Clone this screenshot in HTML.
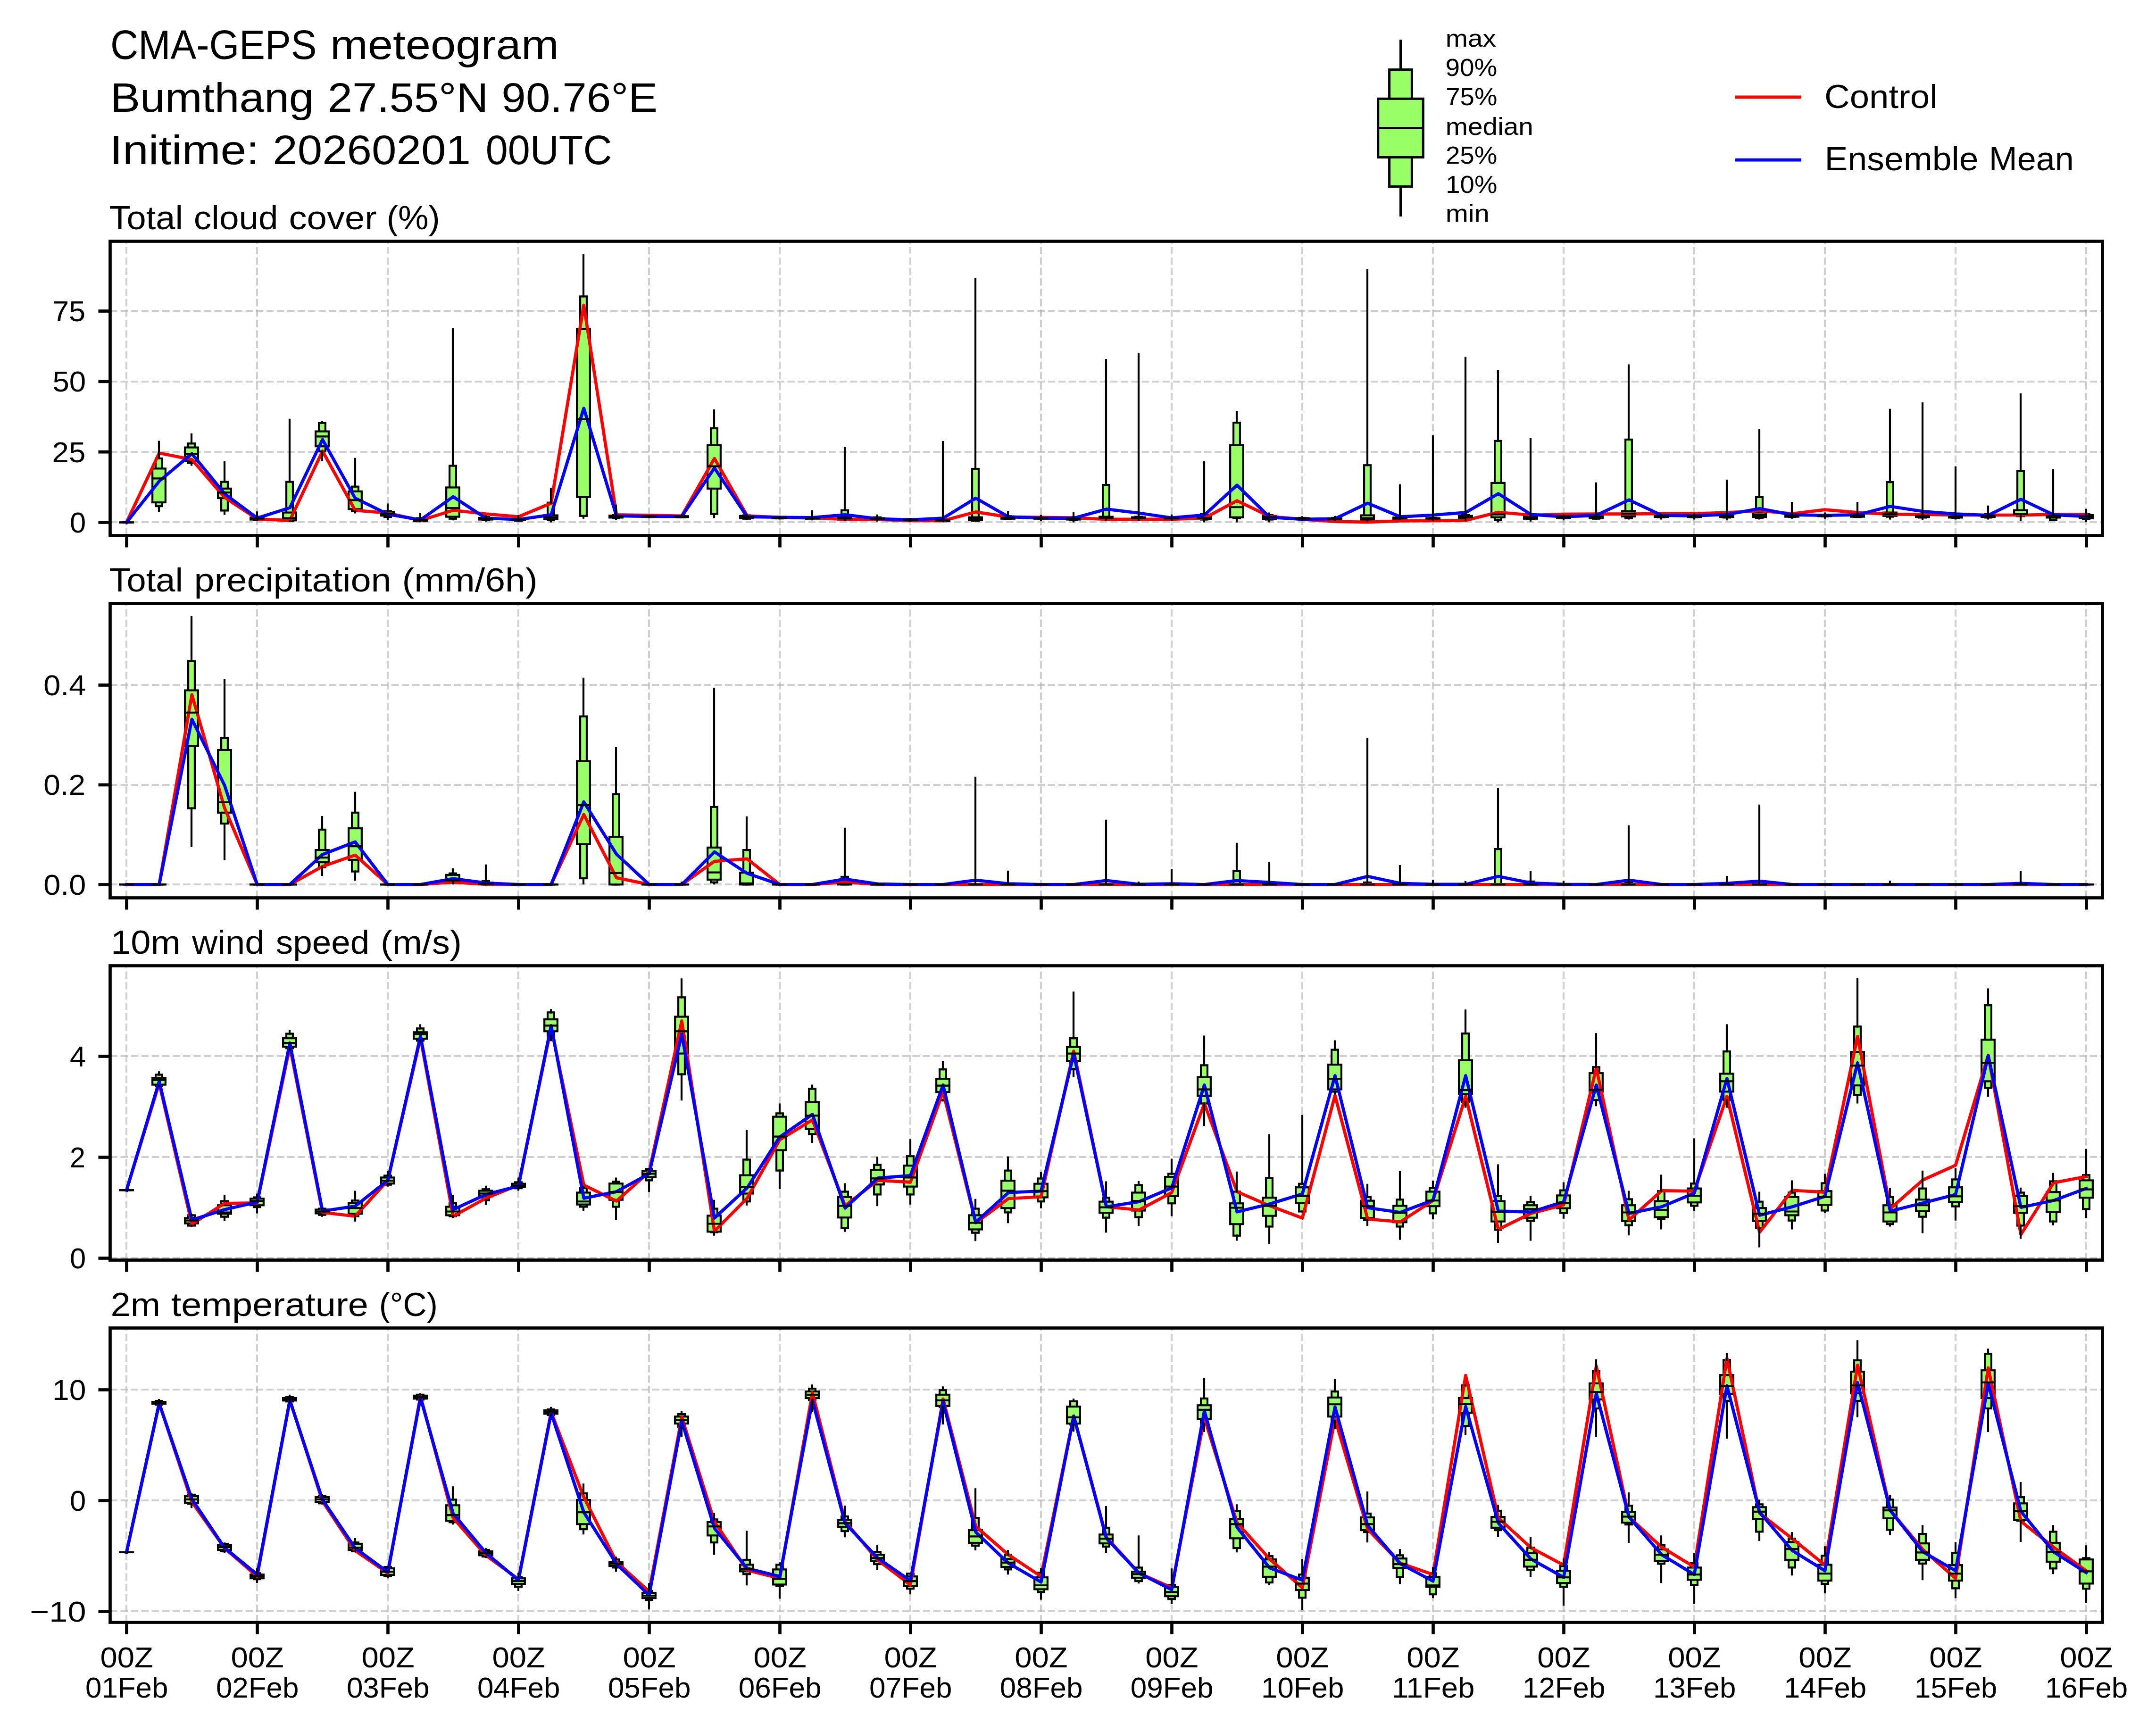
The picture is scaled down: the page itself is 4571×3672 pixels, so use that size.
<!DOCTYPE html>
<html><head><meta charset="utf-8"><title>CMA-GEPS meteogram</title>
<style>html,body{margin:0;padding:0;background:#fff;overflow:hidden;width:4571px;height:3672px}svg{display:block}</style></head>
<body>
<svg width="4571" height="3672" viewBox="0 0 4571 3672" font-family="'Liberation Sans', sans-serif" fill="#000">
<rect width="4571" height="3672" fill="#fff"/>
<text y="124.70" font-size="87.50"><tspan x="234.02" textLength="437.37" lengthAdjust="spacingAndGlyphs">CMA-GEPS</tspan> <tspan x="699.95" textLength="484.81" lengthAdjust="spacingAndGlyphs">meteogram</tspan></text>
<text y="236.80" font-size="87.50"><tspan x="233.91" textLength="431.55" lengthAdjust="spacingAndGlyphs">Bumthang</tspan> <tspan x="694.80" textLength="340.68" lengthAdjust="spacingAndGlyphs">27.55°N</tspan> <tspan x="1063.39" textLength="330.63" lengthAdjust="spacingAndGlyphs">90.76°E</tspan></text>
<text y="348.40" font-size="87.50"><tspan x="232.60" textLength="317.05" lengthAdjust="spacingAndGlyphs">Initime:</tspan> <tspan x="578.24" textLength="419.71" lengthAdjust="spacingAndGlyphs">20260201</tspan> <tspan x="1029.72" textLength="267.75" lengthAdjust="spacingAndGlyphs">00UTC</tspan></text>
<g stroke="#000" stroke-width="5.0" fill="#99ff66">
<line x1="2969.5" y1="84.1" x2="2969.5" y2="458.9"/>
<rect x="2945.60" y="147.6" width="47.8" height="247.80"/>
<rect x="2921.70" y="209.3" width="95.6" height="124.20"/>
<line x1="2921.70" y1="271.5" x2="3017.30" y2="271.5"/>
</g>
<text y="99.00" font-size="52.50"><tspan x="3064.78" textLength="107.13" lengthAdjust="spacingAndGlyphs">max</tspan></text>
<text y="160.90" font-size="52.50"><tspan x="3064.58" textLength="109.75" lengthAdjust="spacingAndGlyphs">90%</tspan></text>
<text y="222.80" font-size="52.50"><tspan x="3065.31" textLength="109.01" lengthAdjust="spacingAndGlyphs">75%</tspan></text>
<text y="285.70" font-size="52.50"><tspan x="3064.77" textLength="186.09" lengthAdjust="spacingAndGlyphs">median</tspan></text>
<text y="346.80" font-size="52.50"><tspan x="3064.91" textLength="109.41" lengthAdjust="spacingAndGlyphs">25%</tspan></text>
<text y="408.70" font-size="52.50"><tspan x="3065.35" textLength="108.97" lengthAdjust="spacingAndGlyphs">10%</tspan></text>
<text y="470.40" font-size="52.50"><tspan x="3064.70" textLength="93.09" lengthAdjust="spacingAndGlyphs">min</tspan></text>
<line x1="3682.4" y1="205.9" x2="3815.7" y2="205.9" stroke="#ff0000" stroke-width="6.67" stroke-linecap="square"/>
<line x1="3682.4" y1="339.2" x2="3815.7" y2="339.2" stroke="#0000ff" stroke-width="6.67" stroke-linecap="square"/>
<text y="229.20" font-size="70.00"><tspan x="3867.97" textLength="239.74" lengthAdjust="spacingAndGlyphs">Control</tspan></text>
<text y="361.30" font-size="70.00"><tspan x="3868.53" textLength="326.11" lengthAdjust="spacingAndGlyphs">Ensemble</tspan> <tspan x="4216.76" textLength="180.01" lengthAdjust="spacingAndGlyphs">Mean</tspan></text>
<clipPath id="c0"><rect x="233.5" y="511.5" width="4224.00" height="624.0"/></clipPath>
<g clip-path="url(#c0)">
<g stroke="#b0b0b0" stroke-opacity="0.6" stroke-width="4.17" stroke-dasharray="15.42 6.67" fill="none">
<line x1="268.00" y1="1135.5" x2="268.00" y2="511.5"/>
<line x1="545.00" y1="1135.5" x2="545.00" y2="511.5"/>
<line x1="822.00" y1="1135.5" x2="822.00" y2="511.5"/>
<line x1="1099.00" y1="1135.5" x2="1099.00" y2="511.5"/>
<line x1="1376.00" y1="1135.5" x2="1376.00" y2="511.5"/>
<line x1="1653.00" y1="1135.5" x2="1653.00" y2="511.5"/>
<line x1="1930.00" y1="1135.5" x2="1930.00" y2="511.5"/>
<line x1="2207.00" y1="1135.5" x2="2207.00" y2="511.5"/>
<line x1="2484.00" y1="1135.5" x2="2484.00" y2="511.5"/>
<line x1="2761.00" y1="1135.5" x2="2761.00" y2="511.5"/>
<line x1="3038.00" y1="1135.5" x2="3038.00" y2="511.5"/>
<line x1="3315.00" y1="1135.5" x2="3315.00" y2="511.5"/>
<line x1="3592.00" y1="1135.5" x2="3592.00" y2="511.5"/>
<line x1="3869.00" y1="1135.5" x2="3869.00" y2="511.5"/>
<line x1="4146.00" y1="1135.5" x2="4146.00" y2="511.5"/>
<line x1="4423.00" y1="1135.5" x2="4423.00" y2="511.5"/>
<line x1="233.5" y1="1107.00" x2="4457.5" y2="1107.00"/>
<line x1="233.5" y1="958.00" x2="4457.5" y2="958.00"/>
<line x1="233.5" y1="809.00" x2="4457.5" y2="809.00"/>
<line x1="233.5" y1="659.00" x2="4457.5" y2="659.00"/>
</g>
<g stroke="#000" stroke-width="4.17" fill="#99ff66">
<rect x="261.08" y="1107.50" width="13.85" height="0.01"/>
<rect x="254.15" y="1107.50" width="27.70" height="0.01"/>
<rect x="330.08" y="971.91" width="13.85" height="101.25"/>
<rect x="323.15" y="993.41" width="27.70" height="71.68"/>
<rect x="399.08" y="940.25" width="13.85" height="41.22"/>
<rect x="392.15" y="948.61" width="27.70" height="29.27"/>
<rect x="469.08" y="1021.48" width="13.85" height="60.93"/>
<rect x="462.15" y="1035.82" width="27.70" height="20.31"/>
<rect x="538.08" y="1095.55" width="13.85" height="6.57"/>
<rect x="531.15" y="1097.35" width="27.70" height="4.18"/>
<rect x="607.08" y="1021.48" width="13.85" height="83.03"/>
<rect x="600.15" y="1086.59" width="27.70" height="16.73"/>
<rect x="676.08" y="896.64" width="13.85" height="60.33"/>
<rect x="669.15" y="914.56" width="27.70" height="31.66"/>
<rect x="746.08" y="1031.64" width="13.85" height="51.97"/>
<rect x="739.15" y="1041.79" width="27.70" height="37.63"/>
<rect x="815.08" y="1083.61" width="13.85" height="12.54"/>
<rect x="808.15" y="1085.40" width="27.70" height="7.77"/>
<rect x="884.08" y="1098.54" width="13.85" height="6.57"/>
<rect x="877.15" y="1099.73" width="27.70" height="4.78"/>
<rect x="953.08" y="987.44" width="13.85" height="112.30"/>
<rect x="946.15" y="1033.43" width="27.70" height="62.12"/>
<rect x="1023.08" y="1096.15" width="13.85" height="6.57"/>
<rect x="1016.15" y="1097.94" width="27.70" height="3.58"/>
<rect x="1092.08" y="1099.73" width="13.85" height="4.18"/>
<rect x="1085.15" y="1100.33" width="27.70" height="2.39"/>
<rect x="1161.08" y="1065.69" width="13.85" height="36.44"/>
<rect x="1154.15" y="1092.57" width="27.70" height="8.36"/>
<rect x="1230.08" y="628.44" width="13.85" height="465.32"/>
<rect x="1223.15" y="697.13" width="27.70" height="356.61"/>
<rect x="1299.08" y="1091.97" width="13.85" height="6.57"/>
<rect x="1292.15" y="1093.16" width="27.70" height="4.18"/>
<rect x="1369.08" y="1093.76" width="13.85" height="2.39"/>
<rect x="1362.15" y="1094.36" width="27.70" height="1.19"/>
<rect x="1438.08" y="1093.76" width="13.85" height="2.99"/>
<rect x="1431.15" y="1094.36" width="27.70" height="1.79"/>
<rect x="1507.08" y="907.99" width="13.85" height="181.59"/>
<rect x="1500.15" y="943.83" width="27.70" height="91.99"/>
<rect x="1576.08" y="1092.57" width="13.85" height="7.17"/>
<rect x="1569.15" y="1093.76" width="27.70" height="4.78"/>
<rect x="1646.08" y="1096.15" width="13.85" height="2.99"/>
<rect x="1639.15" y="1096.75" width="27.70" height="1.79"/>
<rect x="1715.08" y="1096.75" width="13.85" height="4.18"/>
<rect x="1708.15" y="1097.94" width="27.70" height="2.39"/>
<rect x="1784.08" y="1081.81" width="13.85" height="20.31"/>
<rect x="1777.15" y="1095.55" width="27.70" height="5.97"/>
<rect x="1853.08" y="1096.75" width="13.85" height="5.97"/>
<rect x="1846.15" y="1098.54" width="27.70" height="3.58"/>
<rect x="1923.08" y="1100.33" width="13.85" height="3.58"/>
<rect x="1916.15" y="1100.93" width="27.70" height="2.39"/>
<rect x="1992.08" y="1101.53" width="13.85" height="3.58"/>
<rect x="1985.15" y="1102.12" width="27.70" height="2.39"/>
<rect x="2061.08" y="994.01" width="13.85" height="109.91"/>
<rect x="2054.15" y="1096.75" width="27.70" height="5.38"/>
<rect x="2130.08" y="1094.36" width="13.85" height="5.97"/>
<rect x="2123.15" y="1096.15" width="27.70" height="3.58"/>
<rect x="2200.08" y="1096.75" width="13.85" height="3.58"/>
<rect x="2193.15" y="1097.35" width="27.70" height="2.39"/>
<rect x="2269.08" y="1096.75" width="13.85" height="5.97"/>
<rect x="2262.15" y="1097.94" width="27.70" height="3.58"/>
<rect x="2338.08" y="1028.06" width="13.85" height="73.47"/>
<rect x="2331.15" y="1095.55" width="27.70" height="4.78"/>
<rect x="2407.08" y="1095.55" width="13.85" height="6.57"/>
<rect x="2400.15" y="1096.75" width="27.70" height="4.18"/>
<rect x="2477.08" y="1097.35" width="13.85" height="4.18"/>
<rect x="2470.15" y="1097.94" width="27.70" height="2.39"/>
<rect x="2546.08" y="1089.58" width="13.85" height="11.95"/>
<rect x="2539.15" y="1095.55" width="27.70" height="4.78"/>
<rect x="2615.08" y="896.05" width="13.85" height="202.49"/>
<rect x="2608.15" y="943.83" width="27.70" height="152.92"/>
<rect x="2684.08" y="1091.97" width="13.85" height="9.56"/>
<rect x="2677.15" y="1093.76" width="27.70" height="6.57"/>
<rect x="2754.08" y="1097.94" width="13.85" height="3.58"/>
<rect x="2747.15" y="1098.54" width="27.70" height="2.39"/>
<rect x="2823.08" y="1097.94" width="13.85" height="4.78"/>
<rect x="2816.15" y="1099.14" width="27.70" height="2.99"/>
<rect x="2892.08" y="986.24" width="13.85" height="117.08"/>
<rect x="2885.15" y="1092.57" width="27.70" height="9.56"/>
<rect x="2961.08" y="1096.15" width="13.85" height="4.78"/>
<rect x="2954.15" y="1097.35" width="27.70" height="2.99"/>
<rect x="3031.08" y="1097.94" width="13.85" height="4.18"/>
<rect x="3024.15" y="1098.54" width="27.70" height="2.99"/>
<rect x="3100.08" y="1091.97" width="13.85" height="8.36"/>
<rect x="3093.15" y="1093.76" width="27.70" height="5.97"/>
<rect x="3169.08" y="934.87" width="13.85" height="167.25"/>
<rect x="3162.15" y="1023.87" width="27.70" height="72.87"/>
<rect x="3238.08" y="1092.57" width="13.85" height="7.77"/>
<rect x="3231.15" y="1094.36" width="27.70" height="5.38"/>
<rect x="3308.08" y="1093.16" width="13.85" height="5.38"/>
<rect x="3301.15" y="1094.36" width="27.70" height="3.58"/>
<rect x="3377.08" y="1091.37" width="13.85" height="8.36"/>
<rect x="3370.15" y="1093.16" width="27.70" height="5.38"/>
<rect x="3446.08" y="931.88" width="13.85" height="166.66"/>
<rect x="3439.15" y="1083.61" width="27.70" height="11.35"/>
<rect x="3515.08" y="1091.37" width="13.85" height="5.38"/>
<rect x="3508.15" y="1092.57" width="27.70" height="3.58"/>
<rect x="3585.08" y="1092.57" width="13.85" height="4.18"/>
<rect x="3578.15" y="1093.16" width="27.70" height="2.99"/>
<rect x="3654.08" y="1090.18" width="13.85" height="7.17"/>
<rect x="3647.15" y="1091.37" width="27.70" height="4.78"/>
<rect x="3723.08" y="1053.74" width="13.85" height="44.20"/>
<rect x="3716.15" y="1086.59" width="27.70" height="9.56"/>
<rect x="3792.08" y="1090.18" width="13.85" height="5.97"/>
<rect x="3785.15" y="1091.37" width="27.70" height="4.18"/>
<rect x="3862.08" y="1091.37" width="13.85" height="3.58"/>
<rect x="3855.15" y="1091.97" width="27.70" height="2.39"/>
<rect x="3931.08" y="1090.18" width="13.85" height="5.97"/>
<rect x="3924.15" y="1091.37" width="27.70" height="4.18"/>
<rect x="4000.08" y="1022.08" width="13.85" height="73.47"/>
<rect x="3993.15" y="1086.59" width="27.70" height="7.17"/>
<rect x="4069.08" y="1090.18" width="13.85" height="7.17"/>
<rect x="4062.15" y="1091.37" width="27.70" height="4.78"/>
<rect x="4139.08" y="1091.97" width="13.85" height="5.97"/>
<rect x="4132.15" y="1092.57" width="27.70" height="4.78"/>
<rect x="4208.08" y="1089.58" width="13.85" height="7.77"/>
<rect x="4201.15" y="1091.37" width="27.70" height="4.78"/>
<rect x="4277.08" y="998.79" width="13.85" height="95.57"/>
<rect x="4270.15" y="1081.81" width="27.70" height="10.75"/>
<rect x="4346.08" y="1089.58" width="13.85" height="13.14"/>
<rect x="4339.15" y="1090.77" width="27.70" height="6.57"/>
<rect x="4416.08" y="1090.18" width="13.85" height="10.15"/>
<rect x="4409.15" y="1091.97" width="27.70" height="6.57"/>
</g>
<polyline points="268.30,1107.50 337.55,960.56 406.79,974.30 476.04,1054.34 545.28,1100.33 614.53,1103.32 683.78,956.38 753.02,1081.81 822.27,1087.79 891.51,1103.32 960.76,1081.81 1030.00,1089.58 1099.25,1095.55 1168.50,1066.88 1237.74,646.96 1306.99,1091.37 1376.23,1092.57 1445.48,1093.76 1514.73,971.91 1583.97,1093.76 1653.22,1096.75 1722.46,1098.54 1791.71,1100.93 1860.96,1101.53 1930.20,1103.92 1999.45,1103.92 2068.69,1085.40 2137.94,1096.15 2207.19,1096.75 2276.43,1097.94 2345.68,1100.93 2414.92,1100.93 2484.17,1100.93 2553.41,1098.54 2622.66,1061.51 2691.91,1094.96 2761.15,1100.93 2830.40,1105.71 2899.64,1106.90 2968.89,1104.51 3038.14,1103.92 3107.38,1103.32 3176.63,1086.00 3245.87,1091.97 3315.12,1090.18 3384.37,1089.58 3453.61,1089.58 3522.86,1088.98 3592.10,1088.98 3661.35,1086.59 3730.60,1083.01 3799.84,1088.98 3869.09,1080.62 3938.33,1086.59 4007.58,1090.18 4076.82,1090.77 4146.07,1091.97 4215.32,1091.97 4284.56,1091.97 4353.81,1090.77 4423.05,1090.77" fill="none" stroke="#ff0000" stroke-width="6.67" stroke-linejoin="round" stroke-linecap="square"/>
<polyline points="268.30,1107.50 337.55,1020.29 406.79,961.75 476.04,1046.57 545.28,1098.54 614.53,1076.44 683.78,931.88 753.02,1056.13 822.27,1090.18 891.51,1102.12 960.76,1053.14 1030.00,1098.54 1099.25,1101.53 1168.50,1091.37 1237.74,865.58 1306.99,1093.76 1376.23,1094.96 1445.48,1094.96 1514.73,992.22 1583.97,1095.55 1653.22,1096.75 1722.46,1097.35 1791.71,1091.37 1860.96,1099.73 1930.20,1102.12 1999.45,1098.54 2068.69,1056.13 2137.94,1095.55 2207.19,1098.54 2276.43,1098.54 2345.68,1079.43 2414.92,1087.79 2484.17,1097.94 2553.41,1091.97 2622.66,1028.65 2691.91,1096.75 2761.15,1100.93 2830.40,1099.73 2899.64,1066.88 2968.89,1095.55 3038.14,1091.97 3107.38,1086.59 3176.63,1046.57 3245.87,1090.77 3315.12,1095.55 3384.37,1092.57 3453.61,1059.71 3522.86,1092.57 3592.10,1093.76 3661.35,1090.77 3730.60,1078.23 3799.84,1091.37 3869.09,1092.57 3938.33,1091.37 4007.58,1073.45 4076.82,1084.20 4146.07,1089.58 4215.32,1092.57 4284.56,1058.52 4353.81,1091.37 4423.05,1094.96" fill="none" stroke="#0000ff" stroke-width="6.67" stroke-linejoin="round" stroke-linecap="square"/>
<g stroke="#000" stroke-width="4.17" fill="none" stroke-linecap="square">
<path d="M268.00 1107.50V1107.50M268.00 1107.50V1107.50M254.15 1107.50H281.85"/>
<path d="M337.00 971.91V936.60M337.00 1073.15V1083.31M323.15 1014.32H350.85"/>
<path d="M406.00 940.25V920.83M406.00 981.46V985.35M392.15 962.35H419.85"/>
<path d="M476.00 1021.48V979.96M476.00 1082.41V1089.29M462.15 1044.18H489.85"/>
<path d="M545.00 1095.55V1086.29M545.00 1102.12V1102.12M531.15 1099.73H558.85"/>
<path d="M614.00 1021.48V889.77M614.00 1104.51V1104.51M600.15 1098.54H627.85"/>
<path d="M683.00 896.64V894.55M683.00 956.97V975.79M669.15 925.31H696.85"/>
<path d="M753.00 1031.64V972.80M753.00 1083.61V1086.30M739.15 1060.31H766.85"/>
<path d="M822.00 1083.61V1069.56M822.00 1096.15V1100.04M808.15 1088.98H835.85"/>
<path d="M891.00 1098.54V1089.87M891.00 1105.11V1105.11M877.15 1102.12H904.85"/>
<path d="M960.00 987.44V698.02M960.00 1099.73V1101.23M946.15 1077.04H973.85"/>
<path d="M1030.00 1096.15V1094.65M1030.00 1102.72V1103.62M1016.15 1099.73H1043.85"/>
<path d="M1099.00 1099.73V1094.65M1099.00 1103.92V1103.92M1085.15 1101.53H1112.85"/>
<path d="M1168.00 1065.69V1036.11M1168.00 1102.12V1105.41M1154.15 1096.75H1181.85"/>
<path d="M1237.00 628.44V540.33M1237.00 1093.76V1097.65M1223.15 888.88H1250.85"/>
<path d="M1306.00 1091.97V1071.95M1306.00 1098.54V1100.64M1292.15 1094.96H1319.85"/>
<path d="M1376.00 1093.76V1093.76M1376.00 1096.15V1096.15M1362.15 1094.96H1389.85"/>
<path d="M1445.00 1093.76V1092.86M1445.00 1096.75V1096.75M1431.15 1095.55H1458.85"/>
<path d="M1514.00 907.99V870.06M1514.00 1089.58V1096.46M1500.15 988.63H1527.85"/>
<path d="M1583.00 1092.57V1091.67M1583.00 1099.73V1100.04M1569.15 1096.15H1596.85"/>
<path d="M1653.00 1096.15V1096.15M1653.00 1099.14V1099.14M1639.15 1097.94H1666.85"/>
<path d="M1722.00 1096.75V1083.90M1722.00 1100.93V1101.23M1708.15 1099.14H1735.85"/>
<path d="M1791.00 1081.81V950.10M1791.00 1102.12V1102.43M1777.15 1099.14H1804.85"/>
<path d="M1860.00 1096.75V1092.86M1860.00 1102.72V1103.62M1846.15 1100.33H1873.85"/>
<path d="M1930.00 1100.33V1100.03M1930.00 1103.92V1103.92M1916.15 1102.12H1943.85"/>
<path d="M1999.00 1101.53V936.96M1999.00 1105.11V1105.11M1985.15 1103.32H2012.85"/>
<path d="M2068.00 994.01V591.10M2068.00 1103.92V1103.92M2054.15 1100.33H2081.85"/>
<path d="M2137.00 1094.36V1085.09M2137.00 1100.33V1100.33M2123.15 1097.94H2150.85"/>
<path d="M2207.00 1096.75V1093.46M2207.00 1100.33V1101.83M2193.15 1098.54H2220.85"/>
<path d="M2276.00 1096.75V1088.08M2276.00 1102.72V1105.41M2262.15 1099.73H2289.85"/>
<path d="M2345.00 1028.06V763.13M2345.00 1101.53V1101.53M2331.15 1097.94H2358.85"/>
<path d="M2414.00 1095.55V751.19M2414.00 1102.12V1102.12M2400.15 1098.54H2427.85"/>
<path d="M2484.00 1097.35V1092.86M2484.00 1101.53V1103.03M2470.15 1099.14H2497.85"/>
<path d="M2553.00 1089.58V979.96M2553.00 1101.53V1105.41M2539.15 1098.54H2566.85"/>
<path d="M2622.00 896.05V873.04M2622.00 1098.54V1105.41M2608.15 1075.24H2635.85"/>
<path d="M2691.00 1091.97V1088.68M2691.00 1101.53V1105.41M2677.15 1096.75H2704.85"/>
<path d="M2761.00 1097.94V1096.44M2761.00 1101.53V1102.43M2747.15 1099.73H2774.85"/>
<path d="M2830.00 1097.94V1095.85M2830.00 1102.72V1102.72M2816.15 1100.33H2843.85"/>
<path d="M2899.00 986.24V571.99M2899.00 1103.32V1103.62M2885.15 1098.54H2912.85"/>
<path d="M2968.00 1096.15V1028.95M2968.00 1100.93V1100.93M2954.15 1098.54H2981.85"/>
<path d="M3038.00 1097.94V925.01M3038.00 1102.12V1102.43M3024.15 1099.73H3051.85"/>
<path d="M3107.00 1091.97V758.95M3107.00 1100.33V1102.43M3093.15 1096.75H3120.85"/>
<path d="M3176.00 934.87V787.03M3176.00 1102.12V1105.41M3162.15 1090.77H3189.85"/>
<path d="M3245.00 1092.57V930.39M3245.00 1100.33V1103.62M3231.15 1096.75H3258.85"/>
<path d="M3315.00 1093.16V1092.86M3315.00 1098.54V1101.23M3301.15 1096.15H3328.85"/>
<path d="M3384.00 1091.37V1024.76M3384.00 1099.73V1099.73M3370.15 1095.55H3397.85"/>
<path d="M3453.00 931.88V774.48M3453.00 1098.54V1099.44M3439.15 1088.98H3466.85"/>
<path d="M3522.00 1091.37V1091.37M3522.00 1096.75V1099.44M3508.15 1094.36H3535.85"/>
<path d="M3592.00 1092.57V1090.47M3592.00 1096.75V1099.44M3578.15 1094.36H3605.85"/>
<path d="M3661.00 1090.18V1018.79M3661.00 1097.35V1101.23M3647.15 1093.76H3674.85"/>
<path d="M3730.00 1053.74V911.27M3730.00 1097.94V1099.44M3716.15 1091.97H3743.85"/>
<path d="M3799.00 1090.18V1065.98M3799.00 1096.15V1097.65M3785.15 1093.16H3812.85"/>
<path d="M3869.00 1091.37V1088.68M3869.00 1094.96V1097.65M3855.15 1093.16H3882.85"/>
<path d="M3938.00 1090.18V1065.98M3938.00 1096.15V1096.15M3924.15 1093.16H3951.85"/>
<path d="M4007.00 1022.08V868.86M4007.00 1095.55V1099.44M3993.15 1090.18H4020.85"/>
<path d="M4076.00 1090.18V855.12M4076.00 1097.35V1100.64M4062.15 1093.76H4089.85"/>
<path d="M4146.00 1091.97V990.72M4146.00 1097.94V1099.44M4132.15 1094.96H4159.85"/>
<path d="M4215.00 1089.58V1073.75M4215.00 1097.35V1099.44M4201.15 1093.76H4228.85"/>
<path d="M4284.00 998.79V836.01M4284.00 1094.36V1102.43M4270.15 1089.58H4297.85"/>
<path d="M4353.00 1089.58V996.69M4353.00 1102.72V1102.72M4339.15 1093.76H4366.85"/>
<path d="M4423.00 1090.18V1080.91M4423.00 1100.33V1104.22M4409.15 1094.96H4436.85"/>
</g>
</g>
<g stroke="#000" stroke-width="6.67">
<line x1="268.50" y1="1135.5" x2="268.50" y2="1160.5"/>
<line x1="545.50" y1="1135.5" x2="545.50" y2="1160.5"/>
<line x1="822.50" y1="1135.5" x2="822.50" y2="1160.5"/>
<line x1="1099.50" y1="1135.5" x2="1099.50" y2="1160.5"/>
<line x1="1376.50" y1="1135.5" x2="1376.50" y2="1160.5"/>
<line x1="1653.50" y1="1135.5" x2="1653.50" y2="1160.5"/>
<line x1="1930.50" y1="1135.5" x2="1930.50" y2="1160.5"/>
<line x1="2207.50" y1="1135.5" x2="2207.50" y2="1160.5"/>
<line x1="2484.50" y1="1135.5" x2="2484.50" y2="1160.5"/>
<line x1="2761.50" y1="1135.5" x2="2761.50" y2="1160.5"/>
<line x1="3038.50" y1="1135.5" x2="3038.50" y2="1160.5"/>
<line x1="3315.50" y1="1135.5" x2="3315.50" y2="1160.5"/>
<line x1="3592.50" y1="1135.5" x2="3592.50" y2="1160.5"/>
<line x1="3869.50" y1="1135.5" x2="3869.50" y2="1160.5"/>
<line x1="4146.50" y1="1135.5" x2="4146.50" y2="1160.5"/>
<line x1="4423.50" y1="1135.5" x2="4423.50" y2="1160.5"/>
<line x1="233.5" y1="1107.50" x2="208.5" y2="1107.50"/>
<line x1="233.5" y1="958.17" x2="208.5" y2="958.17"/>
<line x1="233.5" y1="808.84" x2="208.5" y2="808.84"/>
<line x1="233.5" y1="659.50" x2="208.5" y2="659.50"/>
</g>
<rect x="233.5" y="511.5" width="4224.00" height="624.0" fill="none" stroke="#000" stroke-width="6.67"/>
<text y="1128.90" font-size="61.25"><tspan x="148.03" textLength="34.20" lengthAdjust="spacingAndGlyphs">0</tspan></text>
<text y="979.57" font-size="61.25"><tspan x="110.55" textLength="70.72" lengthAdjust="spacingAndGlyphs">25</tspan></text>
<text y="830.24" font-size="61.25"><tspan x="111.42" textLength="70.89" lengthAdjust="spacingAndGlyphs">50</tspan></text>
<text y="680.90" font-size="61.25"><tspan x="111.02" textLength="70.23" lengthAdjust="spacingAndGlyphs">75</tspan></text>
<text y="485.80" font-size="70.00"><tspan x="231.64" textLength="156.25" lengthAdjust="spacingAndGlyphs">Total</tspan> <tspan x="410.89" textLength="178.80" lengthAdjust="spacingAndGlyphs">cloud</tspan> <tspan x="612.56" textLength="186.14" lengthAdjust="spacingAndGlyphs">cover</tspan> <tspan x="819.86" textLength="112.91" lengthAdjust="spacingAndGlyphs">(%)</tspan></text>
<clipPath id="c1"><rect x="233.5" y="1279.5" width="4224.00" height="624.0"/></clipPath>
<g clip-path="url(#c1)">
<g stroke="#b0b0b0" stroke-opacity="0.6" stroke-width="4.17" stroke-dasharray="15.42 6.67" fill="none">
<line x1="268.00" y1="1903.5" x2="268.00" y2="1279.5"/>
<line x1="545.00" y1="1903.5" x2="545.00" y2="1279.5"/>
<line x1="822.00" y1="1903.5" x2="822.00" y2="1279.5"/>
<line x1="1099.00" y1="1903.5" x2="1099.00" y2="1279.5"/>
<line x1="1376.00" y1="1903.5" x2="1376.00" y2="1279.5"/>
<line x1="1653.00" y1="1903.5" x2="1653.00" y2="1279.5"/>
<line x1="1930.00" y1="1903.5" x2="1930.00" y2="1279.5"/>
<line x1="2207.00" y1="1903.5" x2="2207.00" y2="1279.5"/>
<line x1="2484.00" y1="1903.5" x2="2484.00" y2="1279.5"/>
<line x1="2761.00" y1="1903.5" x2="2761.00" y2="1279.5"/>
<line x1="3038.00" y1="1903.5" x2="3038.00" y2="1279.5"/>
<line x1="3315.00" y1="1903.5" x2="3315.00" y2="1279.5"/>
<line x1="3592.00" y1="1903.5" x2="3592.00" y2="1279.5"/>
<line x1="3869.00" y1="1903.5" x2="3869.00" y2="1279.5"/>
<line x1="4146.00" y1="1903.5" x2="4146.00" y2="1279.5"/>
<line x1="4423.00" y1="1903.5" x2="4423.00" y2="1279.5"/>
<line x1="233.5" y1="1875.00" x2="4457.5" y2="1875.00"/>
<line x1="233.5" y1="1664.00" x2="4457.5" y2="1664.00"/>
<line x1="233.5" y1="1452.00" x2="4457.5" y2="1452.00"/>
</g>
<g stroke="#000" stroke-width="4.17" fill="#99ff66">
<rect x="261.08" y="1875.28" width="13.85" height="0.01"/>
<rect x="254.15" y="1875.28" width="27.70" height="0.01"/>
<rect x="330.08" y="1875.28" width="13.85" height="0.01"/>
<rect x="323.15" y="1875.28" width="27.70" height="0.01"/>
<rect x="399.08" y="1401.54" width="13.85" height="312.09"/>
<rect x="392.15" y="1463.56" width="27.70" height="118.03"/>
<rect x="469.08" y="1564.79" width="13.85" height="181.25"/>
<rect x="462.15" y="1590.00" width="27.70" height="132.84"/>
<rect x="538.08" y="1875.28" width="13.85" height="0.01"/>
<rect x="531.15" y="1875.28" width="27.70" height="0.01"/>
<rect x="607.08" y="1875.28" width="13.85" height="0.01"/>
<rect x="600.15" y="1875.28" width="27.70" height="0.01"/>
<rect x="676.08" y="1758.85" width="13.85" height="80.02"/>
<rect x="669.15" y="1802.06" width="27.70" height="26.01"/>
<rect x="746.08" y="1722.84" width="13.85" height="124.84"/>
<rect x="739.15" y="1756.05" width="27.70" height="66.82"/>
<rect x="815.08" y="1875.28" width="13.85" height="0.01"/>
<rect x="808.15" y="1875.28" width="27.70" height="0.01"/>
<rect x="884.08" y="1875.28" width="13.85" height="0.01"/>
<rect x="877.15" y="1875.28" width="27.70" height="0.01"/>
<rect x="953.08" y="1851.67" width="13.85" height="19.61"/>
<rect x="946.15" y="1854.87" width="27.70" height="14.80"/>
<rect x="1023.08" y="1868.08" width="13.85" height="7.20"/>
<rect x="1016.15" y="1871.28" width="27.70" height="3.60"/>
<rect x="1092.08" y="1875.28" width="13.85" height="0.01"/>
<rect x="1085.15" y="1875.28" width="27.70" height="0.01"/>
<rect x="1161.08" y="1875.28" width="13.85" height="0.01"/>
<rect x="1154.15" y="1875.28" width="27.70" height="0.01"/>
<rect x="1230.08" y="1518.78" width="13.85" height="343.30"/>
<rect x="1223.15" y="1613.61" width="27.70" height="176.05"/>
<rect x="1299.08" y="1683.63" width="13.85" height="191.66"/>
<rect x="1292.15" y="1774.05" width="27.70" height="101.23"/>
<rect x="1369.08" y="1875.28" width="13.85" height="0.01"/>
<rect x="1362.15" y="1875.28" width="27.70" height="0.01"/>
<rect x="1438.08" y="1875.28" width="13.85" height="0.01"/>
<rect x="1431.15" y="1875.28" width="27.70" height="0.01"/>
<rect x="1507.08" y="1710.83" width="13.85" height="160.05"/>
<rect x="1500.15" y="1796.86" width="27.70" height="68.02"/>
<rect x="1576.08" y="1802.06" width="13.85" height="73.22"/>
<rect x="1569.15" y="1850.07" width="27.70" height="25.21"/>
<rect x="1646.08" y="1875.28" width="13.85" height="0.01"/>
<rect x="1639.15" y="1875.28" width="27.70" height="0.01"/>
<rect x="1715.08" y="1875.28" width="13.85" height="0.01"/>
<rect x="1708.15" y="1875.28" width="27.70" height="0.01"/>
<rect x="1784.08" y="1858.88" width="13.85" height="16.40"/>
<rect x="1777.15" y="1870.88" width="27.70" height="4.40"/>
<rect x="1853.08" y="1875.28" width="13.85" height="0.01"/>
<rect x="1846.15" y="1875.28" width="27.70" height="0.01"/>
<rect x="1923.08" y="1875.28" width="13.85" height="0.01"/>
<rect x="1916.15" y="1875.28" width="27.70" height="0.01"/>
<rect x="1992.08" y="1875.28" width="13.85" height="0.01"/>
<rect x="1985.15" y="1875.28" width="27.70" height="0.01"/>
<rect x="2061.08" y="1875.28" width="13.85" height="0.01"/>
<rect x="2054.15" y="1875.28" width="27.70" height="0.01"/>
<rect x="2130.08" y="1875.28" width="13.85" height="0.01"/>
<rect x="2123.15" y="1875.28" width="27.70" height="0.01"/>
<rect x="2200.08" y="1875.28" width="13.85" height="0.01"/>
<rect x="2193.15" y="1875.28" width="27.70" height="0.01"/>
<rect x="2269.08" y="1875.28" width="13.85" height="0.01"/>
<rect x="2262.15" y="1875.28" width="27.70" height="0.01"/>
<rect x="2338.08" y="1875.28" width="13.85" height="0.01"/>
<rect x="2331.15" y="1875.28" width="27.70" height="0.01"/>
<rect x="2407.08" y="1875.28" width="13.85" height="0.01"/>
<rect x="2400.15" y="1875.28" width="27.70" height="0.01"/>
<rect x="2477.08" y="1875.28" width="13.85" height="0.01"/>
<rect x="2470.15" y="1875.28" width="27.70" height="0.01"/>
<rect x="2546.08" y="1875.28" width="13.85" height="0.01"/>
<rect x="2539.15" y="1875.28" width="27.70" height="0.01"/>
<rect x="2615.08" y="1846.87" width="13.85" height="28.41"/>
<rect x="2608.15" y="1875.28" width="27.70" height="0.01"/>
<rect x="2684.08" y="1875.28" width="13.85" height="0.01"/>
<rect x="2677.15" y="1875.28" width="27.70" height="0.01"/>
<rect x="2754.08" y="1875.28" width="13.85" height="0.01"/>
<rect x="2747.15" y="1875.28" width="27.70" height="0.01"/>
<rect x="2823.08" y="1875.28" width="13.85" height="0.01"/>
<rect x="2816.15" y="1875.28" width="27.70" height="0.01"/>
<rect x="2892.08" y="1870.88" width="13.85" height="4.40"/>
<rect x="2885.15" y="1875.28" width="27.70" height="0.01"/>
<rect x="2961.08" y="1875.28" width="13.85" height="0.01"/>
<rect x="2954.15" y="1875.28" width="27.70" height="0.01"/>
<rect x="3031.08" y="1875.28" width="13.85" height="0.01"/>
<rect x="3024.15" y="1875.28" width="27.70" height="0.01"/>
<rect x="3100.08" y="1875.28" width="13.85" height="0.01"/>
<rect x="3093.15" y="1875.28" width="27.70" height="0.01"/>
<rect x="3169.08" y="1800.06" width="13.85" height="75.22"/>
<rect x="3162.15" y="1875.28" width="27.70" height="0.01"/>
<rect x="3238.08" y="1868.88" width="13.85" height="6.40"/>
<rect x="3231.15" y="1875.28" width="27.70" height="0.01"/>
<rect x="3308.08" y="1875.28" width="13.85" height="0.01"/>
<rect x="3301.15" y="1875.28" width="27.70" height="0.01"/>
<rect x="3377.08" y="1875.28" width="13.85" height="0.01"/>
<rect x="3370.15" y="1875.28" width="27.70" height="0.01"/>
<rect x="3446.08" y="1872.08" width="13.85" height="3.20"/>
<rect x="3439.15" y="1875.28" width="27.70" height="0.01"/>
<rect x="3515.08" y="1875.28" width="13.85" height="0.01"/>
<rect x="3508.15" y="1875.28" width="27.70" height="0.01"/>
<rect x="3585.08" y="1875.28" width="13.85" height="0.01"/>
<rect x="3578.15" y="1875.28" width="27.70" height="0.01"/>
<rect x="3654.08" y="1875.28" width="13.85" height="0.01"/>
<rect x="3647.15" y="1875.28" width="27.70" height="0.01"/>
<rect x="3723.08" y="1875.28" width="13.85" height="0.01"/>
<rect x="3716.15" y="1875.28" width="27.70" height="0.01"/>
<rect x="3792.08" y="1875.28" width="13.85" height="0.01"/>
<rect x="3785.15" y="1875.28" width="27.70" height="0.01"/>
<rect x="3862.08" y="1875.28" width="13.85" height="0.01"/>
<rect x="3855.15" y="1875.28" width="27.70" height="0.01"/>
<rect x="3931.08" y="1875.28" width="13.85" height="0.01"/>
<rect x="3924.15" y="1875.28" width="27.70" height="0.01"/>
<rect x="4000.08" y="1875.28" width="13.85" height="0.01"/>
<rect x="3993.15" y="1875.28" width="27.70" height="0.01"/>
<rect x="4069.08" y="1875.28" width="13.85" height="0.01"/>
<rect x="4062.15" y="1875.28" width="27.70" height="0.01"/>
<rect x="4139.08" y="1875.28" width="13.85" height="0.01"/>
<rect x="4132.15" y="1875.28" width="27.70" height="0.01"/>
<rect x="4208.08" y="1875.28" width="13.85" height="0.01"/>
<rect x="4201.15" y="1875.28" width="27.70" height="0.01"/>
<rect x="4277.08" y="1875.28" width="13.85" height="0.01"/>
<rect x="4270.15" y="1875.28" width="27.70" height="0.01"/>
<rect x="4346.08" y="1875.28" width="13.85" height="0.01"/>
<rect x="4339.15" y="1875.28" width="27.70" height="0.01"/>
<rect x="4416.08" y="1875.28" width="13.85" height="0.01"/>
<rect x="4409.15" y="1875.28" width="27.70" height="0.01"/>
</g>
<polyline points="268.30,1875.28 337.55,1875.28 406.79,1472.76 476.04,1712.83 545.28,1875.28 614.53,1875.28 683.78,1836.87 753.02,1812.86 822.27,1875.28 891.51,1875.28 960.76,1870.08 1030.00,1874.88 1099.25,1875.28 1168.50,1875.28 1237.74,1726.84 1306.99,1860.88 1376.23,1875.28 1445.48,1875.28 1514.73,1826.07 1583.97,1820.87 1653.22,1875.28 1722.46,1875.28 1791.71,1870.08 1860.96,1875.28 1930.20,1875.28 1999.45,1875.28 2068.69,1875.28 2137.94,1875.28 2207.19,1875.28 2276.43,1875.28 2345.68,1875.28 2414.92,1875.28 2484.17,1875.28 2553.41,1875.28 2622.66,1875.28 2691.91,1875.28 2761.15,1875.28 2830.40,1875.28 2899.64,1875.28 2968.89,1875.28 3038.14,1875.28 3107.38,1875.28 3176.63,1875.28 3245.87,1875.28 3315.12,1875.28 3384.37,1875.28 3453.61,1875.28 3522.86,1875.28 3592.10,1875.28 3661.35,1875.28 3730.60,1875.28 3799.84,1875.28 3869.09,1875.28 3938.33,1875.28 4007.58,1875.28 4076.82,1875.28 4146.07,1875.28 4215.32,1875.28 4284.56,1875.28 4353.81,1875.28 4423.05,1875.28" fill="none" stroke="#ff0000" stroke-width="6.67" stroke-linejoin="round" stroke-linecap="square"/>
<polyline points="268.30,1875.28 337.55,1875.28 406.79,1524.78 476.04,1664.82 545.28,1875.28 614.53,1875.28 683.78,1811.66 753.02,1784.85 822.27,1875.28 891.51,1875.28 960.76,1862.88 1030.00,1872.08 1099.25,1875.28 1168.50,1875.28 1237.74,1700.03 1306.99,1810.86 1376.23,1875.28 1445.48,1875.28 1514.73,1806.06 1583.97,1851.67 1653.22,1875.28 1722.46,1875.28 1791.71,1863.68 1860.96,1874.08 1930.20,1875.28 1999.45,1875.28 2068.69,1866.08 2137.94,1873.68 2207.19,1875.28 2276.43,1875.28 2345.68,1866.88 2414.92,1874.88 2484.17,1873.68 2553.41,1875.28 2622.66,1866.88 2691.91,1870.88 2761.15,1875.28 2830.40,1875.28 2899.64,1858.08 2968.89,1872.88 3038.14,1874.88 3107.38,1874.88 3176.63,1858.08 3245.87,1872.08 3315.12,1874.88 3384.37,1875.28 3453.61,1866.08 3522.86,1875.28 3592.10,1875.28 3661.35,1872.88 3730.60,1868.08 3799.84,1875.28 3869.09,1875.28 3938.33,1875.28 4007.58,1875.28 4076.82,1875.28 4146.07,1875.28 4215.32,1875.28 4284.56,1872.88 4353.81,1875.28 4423.05,1875.28" fill="none" stroke="#0000ff" stroke-width="6.67" stroke-linejoin="round" stroke-linecap="square"/>
<g stroke="#000" stroke-width="4.17" fill="none" stroke-linecap="square">
<path d="M268.00 1875.28V1875.28M268.00 1875.28V1875.28M254.15 1875.28H281.85"/>
<path d="M337.00 1875.28V1875.28M337.00 1875.28V1875.28M323.15 1875.28H350.85"/>
<path d="M406.00 1401.54V1308.00M406.00 1713.63V1793.97M392.15 1510.78H419.85"/>
<path d="M476.00 1564.79V1442.04M476.00 1746.04V1821.58M462.15 1700.83H489.85"/>
<path d="M545.00 1875.28V1875.28M545.00 1875.28V1875.28M531.15 1875.28H558.85"/>
<path d="M614.00 1875.28V1875.28M614.00 1875.28V1875.28M600.15 1875.28H627.85"/>
<path d="M683.00 1758.85V1732.12M683.00 1838.87V1854.79M669.15 1818.06H696.85"/>
<path d="M753.00 1722.84V1680.91M753.00 1847.67V1864.79M739.15 1794.06H766.85"/>
<path d="M822.00 1875.28V1875.28M822.00 1875.28V1875.28M808.15 1875.28H835.85"/>
<path d="M891.00 1875.28V1875.28M891.00 1875.28V1875.28M877.15 1875.28H904.85"/>
<path d="M960.00 1851.67V1842.96M960.00 1871.28V1873.20M946.15 1866.88H973.85"/>
<path d="M1030.00 1868.08V1834.95M1030.00 1875.28V1875.28M1016.15 1873.68H1043.85"/>
<path d="M1099.00 1875.28V1875.28M1099.00 1875.28V1875.28M1085.15 1875.28H1112.85"/>
<path d="M1168.00 1875.28V1875.28M1168.00 1875.28V1875.28M1154.15 1875.28H1181.85"/>
<path d="M1237.00 1518.78V1438.84M1237.00 1862.08V1873.20M1223.15 1706.83H1250.85"/>
<path d="M1306.00 1683.63V1586.08M1306.00 1875.28V1875.28M1292.15 1850.87H1319.85"/>
<path d="M1376.00 1875.28V1875.28M1376.00 1875.28V1875.28M1362.15 1875.28H1389.85"/>
<path d="M1445.00 1875.28V1870.96M1445.00 1875.28V1875.28M1431.15 1875.28H1458.85"/>
<path d="M1514.00 1710.83V1460.05M1514.00 1870.88V1873.20M1500.15 1849.67H1527.85"/>
<path d="M1583.00 1802.06V1732.92M1583.00 1875.28V1875.28M1569.15 1872.88H1596.85"/>
<path d="M1653.00 1875.28V1875.28M1653.00 1875.28V1875.28M1639.15 1875.28H1666.85"/>
<path d="M1722.00 1875.28V1875.28M1722.00 1875.28V1875.28M1708.15 1875.28H1735.85"/>
<path d="M1791.00 1858.88V1756.93M1791.00 1875.28V1875.28M1777.15 1874.88H1804.85"/>
<path d="M1860.00 1875.28V1872.96M1860.00 1875.28V1875.28M1846.15 1875.28H1873.85"/>
<path d="M1930.00 1875.28V1875.28M1930.00 1875.28V1875.28M1916.15 1875.28H1943.85"/>
<path d="M1999.00 1875.28V1875.28M1999.00 1875.28V1875.28M1985.15 1875.28H2012.85"/>
<path d="M2068.00 1875.28V1648.90M2068.00 1875.28V1875.28M2054.15 1875.28H2081.85"/>
<path d="M2137.00 1875.28V1847.76M2137.00 1875.28V1875.28M2123.15 1875.28H2150.85"/>
<path d="M2207.00 1875.28V1875.28M2207.00 1875.28V1875.28M2193.15 1875.28H2220.85"/>
<path d="M2276.00 1875.28V1875.28M2276.00 1875.28V1875.28M2262.15 1875.28H2289.85"/>
<path d="M2345.00 1875.28V1739.73M2345.00 1875.28V1875.28M2331.15 1875.28H2358.85"/>
<path d="M2414.00 1875.28V1870.96M2414.00 1875.28V1875.28M2400.15 1875.28H2427.85"/>
<path d="M2484.00 1875.28V1844.16M2484.00 1875.28V1875.28M2470.15 1875.28H2497.85"/>
<path d="M2553.00 1875.28V1875.28M2553.00 1875.28V1875.28M2539.15 1875.28H2566.85"/>
<path d="M2622.00 1846.87V1788.94M2622.00 1875.28V1875.28M2608.15 1875.28H2635.85"/>
<path d="M2691.00 1875.28V1830.15M2691.00 1875.28V1875.28M2677.15 1875.28H2704.85"/>
<path d="M2761.00 1875.28V1875.28M2761.00 1875.28V1875.28M2747.15 1875.28H2774.85"/>
<path d="M2830.00 1875.28V1875.28M2830.00 1875.28V1875.28M2816.15 1875.28H2843.85"/>
<path d="M2899.00 1870.88V1566.88M2899.00 1875.28V1875.28M2885.15 1875.28H2912.85"/>
<path d="M2968.00 1875.28V1836.15M2968.00 1875.28V1875.28M2954.15 1875.28H2981.85"/>
<path d="M3038.00 1875.28V1866.96M3038.00 1875.28V1875.28M3024.15 1875.28H3051.85"/>
<path d="M3107.00 1875.28V1870.16M3107.00 1875.28V1875.28M3093.15 1875.28H3120.85"/>
<path d="M3176.00 1800.06V1672.91M3176.00 1875.28V1875.28M3162.15 1875.28H3189.85"/>
<path d="M3245.00 1868.88V1848.16M3245.00 1875.28V1875.28M3231.15 1875.28H3258.85"/>
<path d="M3315.00 1875.28V1870.16M3315.00 1875.28V1875.28M3301.15 1875.28H3328.85"/>
<path d="M3384.00 1875.28V1875.28M3384.00 1875.28V1875.28M3370.15 1875.28H3397.85"/>
<path d="M3453.00 1872.08V1751.73M3453.00 1875.28V1875.28M3439.15 1875.28H3466.85"/>
<path d="M3522.00 1875.28V1875.28M3522.00 1875.28V1875.28M3508.15 1875.28H3535.85"/>
<path d="M3592.00 1875.28V1875.28M3592.00 1875.28V1875.28M3578.15 1875.28H3605.85"/>
<path d="M3661.00 1875.28V1858.96M3661.00 1875.28V1875.28M3647.15 1875.28H3674.85"/>
<path d="M3730.00 1875.28V1707.72M3730.00 1875.28V1875.28M3716.15 1875.28H3743.85"/>
<path d="M3799.00 1875.28V1875.28M3799.00 1875.28V1875.28M3785.15 1875.28H3812.85"/>
<path d="M3869.00 1875.28V1875.28M3869.00 1875.28V1875.28M3855.15 1875.28H3882.85"/>
<path d="M3938.00 1875.28V1875.28M3938.00 1875.28V1875.28M3924.15 1875.28H3951.85"/>
<path d="M4007.00 1875.28V1868.96M4007.00 1875.28V1875.28M3993.15 1875.28H4020.85"/>
<path d="M4076.00 1875.28V1875.28M4076.00 1875.28V1875.28M4062.15 1875.28H4089.85"/>
<path d="M4146.00 1875.28V1875.28M4146.00 1875.28V1875.28M4132.15 1875.28H4159.85"/>
<path d="M4215.00 1875.28V1875.28M4215.00 1875.28V1875.28M4201.15 1875.28H4228.85"/>
<path d="M4284.00 1875.28V1848.96M4284.00 1875.28V1875.28M4270.15 1875.28H4297.85"/>
<path d="M4353.00 1875.28V1875.28M4353.00 1875.28V1875.28M4339.15 1875.28H4366.85"/>
<path d="M4423.00 1875.28V1875.28M4423.00 1875.28V1875.28M4409.15 1875.28H4436.85"/>
</g>
</g>
<g stroke="#000" stroke-width="6.67">
<line x1="268.50" y1="1903.5" x2="268.50" y2="1928.5"/>
<line x1="545.50" y1="1903.5" x2="545.50" y2="1928.5"/>
<line x1="822.50" y1="1903.5" x2="822.50" y2="1928.5"/>
<line x1="1099.50" y1="1903.5" x2="1099.50" y2="1928.5"/>
<line x1="1376.50" y1="1903.5" x2="1376.50" y2="1928.5"/>
<line x1="1653.50" y1="1903.5" x2="1653.50" y2="1928.5"/>
<line x1="1930.50" y1="1903.5" x2="1930.50" y2="1928.5"/>
<line x1="2207.50" y1="1903.5" x2="2207.50" y2="1928.5"/>
<line x1="2484.50" y1="1903.5" x2="2484.50" y2="1928.5"/>
<line x1="2761.50" y1="1903.5" x2="2761.50" y2="1928.5"/>
<line x1="3038.50" y1="1903.5" x2="3038.50" y2="1928.5"/>
<line x1="3315.50" y1="1903.5" x2="3315.50" y2="1928.5"/>
<line x1="3592.50" y1="1903.5" x2="3592.50" y2="1928.5"/>
<line x1="3869.50" y1="1903.5" x2="3869.50" y2="1928.5"/>
<line x1="4146.50" y1="1903.5" x2="4146.50" y2="1928.5"/>
<line x1="4423.50" y1="1903.5" x2="4423.50" y2="1928.5"/>
<line x1="233.5" y1="1875.50" x2="208.5" y2="1875.50"/>
<line x1="233.5" y1="1664.00" x2="208.5" y2="1664.00"/>
<line x1="233.5" y1="1452.50" x2="208.5" y2="1452.50"/>
</g>
<rect x="233.5" y="1279.5" width="4224.00" height="624.0" fill="none" stroke="#000" stroke-width="6.67"/>
<text y="1896.90" font-size="61.25"><tspan x="92.24" textLength="90.12" lengthAdjust="spacingAndGlyphs">0.0</tspan></text>
<text y="1685.40" font-size="61.25"><tspan x="92.28" textLength="88.79" lengthAdjust="spacingAndGlyphs">0.2</tspan></text>
<text y="1473.90" font-size="61.25"><tspan x="92.24" textLength="90.08" lengthAdjust="spacingAndGlyphs">0.4</tspan></text>
<text y="1253.80" font-size="70.00"><tspan x="231.64" textLength="156.25" lengthAdjust="spacingAndGlyphs">Total</tspan> <tspan x="411.44" textLength="418.31" lengthAdjust="spacingAndGlyphs">precipitation</tspan> <tspan x="852.52" textLength="287.14" lengthAdjust="spacingAndGlyphs">(mm/6h)</tspan></text>
<clipPath id="c2"><rect x="233.5" y="2047.5" width="4224.00" height="624.0"/></clipPath>
<g clip-path="url(#c2)">
<g stroke="#b0b0b0" stroke-opacity="0.6" stroke-width="4.17" stroke-dasharray="15.42 6.67" fill="none">
<line x1="268.00" y1="2671.5" x2="268.00" y2="2047.5"/>
<line x1="545.00" y1="2671.5" x2="545.00" y2="2047.5"/>
<line x1="822.00" y1="2671.5" x2="822.00" y2="2047.5"/>
<line x1="1099.00" y1="2671.5" x2="1099.00" y2="2047.5"/>
<line x1="1376.00" y1="2671.5" x2="1376.00" y2="2047.5"/>
<line x1="1653.00" y1="2671.5" x2="1653.00" y2="2047.5"/>
<line x1="1930.00" y1="2671.5" x2="1930.00" y2="2047.5"/>
<line x1="2207.00" y1="2671.5" x2="2207.00" y2="2047.5"/>
<line x1="2484.00" y1="2671.5" x2="2484.00" y2="2047.5"/>
<line x1="2761.00" y1="2671.5" x2="2761.00" y2="2047.5"/>
<line x1="3038.00" y1="2671.5" x2="3038.00" y2="2047.5"/>
<line x1="3315.00" y1="2671.5" x2="3315.00" y2="2047.5"/>
<line x1="3592.00" y1="2671.5" x2="3592.00" y2="2047.5"/>
<line x1="3869.00" y1="2671.5" x2="3869.00" y2="2047.5"/>
<line x1="4146.00" y1="2671.5" x2="4146.00" y2="2047.5"/>
<line x1="4423.00" y1="2671.5" x2="4423.00" y2="2047.5"/>
<line x1="233.5" y1="2667.00" x2="4457.5" y2="2667.00"/>
<line x1="233.5" y1="2453.00" x2="4457.5" y2="2453.00"/>
<line x1="233.5" y1="2239.00" x2="4457.5" y2="2239.00"/>
</g>
<g stroke="#000" stroke-width="4.17" fill="#99ff66">
<rect x="261.08" y="2523.25" width="13.85" height="0.01"/>
<rect x="254.15" y="2523.25" width="27.70" height="0.01"/>
<rect x="330.08" y="2278.38" width="13.85" height="24.01"/>
<rect x="323.15" y="2285.18" width="27.70" height="14.40"/>
<rect x="399.08" y="2576.46" width="13.85" height="22.01"/>
<rect x="392.15" y="2582.46" width="27.70" height="11.20"/>
<rect x="469.08" y="2546.45" width="13.85" height="33.21"/>
<rect x="462.15" y="2555.26" width="27.70" height="18.01"/>
<rect x="538.08" y="2538.45" width="13.85" height="20.81"/>
<rect x="531.15" y="2541.25" width="27.70" height="14.00"/>
<rect x="607.08" y="2191.55" width="13.85" height="30.81"/>
<rect x="600.15" y="2201.15" width="27.70" height="18.01"/>
<rect x="676.08" y="2562.46" width="13.85" height="13.20"/>
<rect x="669.15" y="2564.46" width="27.70" height="8.00"/>
<rect x="746.08" y="2545.25" width="13.85" height="33.21"/>
<rect x="739.15" y="2550.45" width="27.70" height="22.81"/>
<rect x="815.08" y="2492.44" width="13.85" height="19.21"/>
<rect x="808.15" y="2496.44" width="27.70" height="12.80"/>
<rect x="884.08" y="2180.35" width="13.85" height="26.01"/>
<rect x="877.15" y="2188.35" width="27.70" height="14.00"/>
<rect x="953.08" y="2550.45" width="13.85" height="28.01"/>
<rect x="946.15" y="2558.46" width="27.70" height="18.01"/>
<rect x="1023.08" y="2521.25" width="13.85" height="23.21"/>
<rect x="1016.15" y="2524.45" width="27.70" height="12.00"/>
<rect x="1092.08" y="2506.44" width="13.85" height="12.80"/>
<rect x="1085.15" y="2509.64" width="27.70" height="6.80"/>
<rect x="1161.08" y="2146.34" width="13.85" height="50.01"/>
<rect x="1154.15" y="2161.14" width="27.70" height="25.21"/>
<rect x="1230.08" y="2518.44" width="13.85" height="40.01"/>
<rect x="1223.15" y="2528.45" width="27.70" height="25.21"/>
<rect x="1299.08" y="2505.24" width="13.85" height="53.22"/>
<rect x="1292.15" y="2509.24" width="27.70" height="34.41"/>
<rect x="1369.08" y="2478.43" width="13.85" height="24.01"/>
<rect x="1362.15" y="2482.43" width="27.70" height="13.20"/>
<rect x="1438.08" y="2114.33" width="13.85" height="163.25"/>
<rect x="1431.15" y="2155.54" width="27.70" height="78.02"/>
<rect x="1507.08" y="2562.46" width="13.85" height="50.01"/>
<rect x="1500.15" y="2577.26" width="27.70" height="34.01"/>
<rect x="1576.08" y="2458.43" width="13.85" height="88.83"/>
<rect x="1569.15" y="2491.64" width="27.70" height="38.81"/>
<rect x="1646.08" y="2360.40" width="13.85" height="121.23"/>
<rect x="1639.15" y="2367.60" width="27.70" height="70.82"/>
<rect x="1715.08" y="2308.38" width="13.85" height="96.03"/>
<rect x="1708.15" y="2336.39" width="27.70" height="57.22"/>
<rect x="1784.08" y="2526.45" width="13.85" height="76.82"/>
<rect x="1777.15" y="2537.65" width="27.70" height="43.61"/>
<rect x="1853.08" y="2469.63" width="13.85" height="62.82"/>
<rect x="1846.15" y="2480.43" width="27.70" height="30.81"/>
<rect x="1923.08" y="2451.23" width="13.85" height="81.22"/>
<rect x="1916.15" y="2471.23" width="27.70" height="44.41"/>
<rect x="1992.08" y="2267.17" width="13.85" height="65.22"/>
<rect x="1985.15" y="2287.18" width="27.70" height="28.01"/>
<rect x="2061.08" y="2562.46" width="13.85" height="51.21"/>
<rect x="2054.15" y="2576.46" width="27.70" height="30.01"/>
<rect x="2130.08" y="2481.63" width="13.85" height="88.83"/>
<rect x="2123.15" y="2503.24" width="27.70" height="58.02"/>
<rect x="2200.08" y="2498.44" width="13.85" height="48.81"/>
<rect x="2193.15" y="2509.64" width="27.70" height="28.81"/>
<rect x="2269.08" y="2201.15" width="13.85" height="65.22"/>
<rect x="2262.15" y="2219.56" width="27.70" height="29.61"/>
<rect x="2338.08" y="2539.25" width="13.85" height="42.41"/>
<rect x="2331.15" y="2547.65" width="27.70" height="23.61"/>
<rect x="2407.08" y="2512.44" width="13.85" height="68.02"/>
<rect x="2400.15" y="2528.45" width="27.70" height="38.01"/>
<rect x="2477.08" y="2488.44" width="13.85" height="62.82"/>
<rect x="2470.15" y="2495.24" width="27.70" height="40.41"/>
<rect x="2546.08" y="2258.37" width="13.85" height="81.22"/>
<rect x="2539.15" y="2283.58" width="27.70" height="40.01"/>
<rect x="2615.08" y="2526.45" width="13.85" height="93.23"/>
<rect x="2608.15" y="2551.25" width="27.70" height="44.01"/>
<rect x="2684.08" y="2497.64" width="13.85" height="102.83"/>
<rect x="2677.15" y="2539.25" width="27.70" height="38.41"/>
<rect x="2754.08" y="2509.64" width="13.85" height="58.82"/>
<rect x="2747.15" y="2517.24" width="27.70" height="33.21"/>
<rect x="2823.08" y="2225.56" width="13.85" height="88.83"/>
<rect x="2816.15" y="2257.17" width="27.70" height="52.42"/>
<rect x="2892.08" y="2537.65" width="13.85" height="48.81"/>
<rect x="2885.15" y="2545.65" width="27.70" height="36.81"/>
<rect x="2961.08" y="2543.25" width="13.85" height="57.22"/>
<rect x="2954.15" y="2556.46" width="27.70" height="34.81"/>
<rect x="3031.08" y="2518.44" width="13.85" height="54.02"/>
<rect x="3024.15" y="2526.45" width="27.70" height="30.81"/>
<rect x="3100.08" y="2191.15" width="13.85" height="145.24"/>
<rect x="3093.15" y="2247.57" width="27.70" height="72.02"/>
<rect x="3169.08" y="2535.65" width="13.85" height="71.62"/>
<rect x="3162.15" y="2546.45" width="27.70" height="43.21"/>
<rect x="3238.08" y="2548.45" width="13.85" height="40.01"/>
<rect x="3231.15" y="2555.26" width="27.70" height="26.41"/>
<rect x="3308.08" y="2523.65" width="13.85" height="48.01"/>
<rect x="3301.15" y="2534.45" width="27.70" height="27.21"/>
<rect x="3377.08" y="2262.37" width="13.85" height="70.02"/>
<rect x="3370.15" y="2275.17" width="27.70" height="39.21"/>
<rect x="3446.08" y="2542.45" width="13.85" height="55.22"/>
<rect x="3439.15" y="2555.26" width="27.70" height="33.21"/>
<rect x="3515.08" y="2525.25" width="13.85" height="59.22"/>
<rect x="3508.15" y="2546.45" width="27.70" height="34.01"/>
<rect x="3585.08" y="2509.24" width="13.85" height="47.21"/>
<rect x="3578.15" y="2519.65" width="27.70" height="29.61"/>
<rect x="3654.08" y="2229.16" width="13.85" height="103.23"/>
<rect x="3647.15" y="2276.38" width="27.70" height="38.01"/>
<rect x="3723.08" y="2547.65" width="13.85" height="56.02"/>
<rect x="3716.15" y="2561.26" width="27.70" height="27.21"/>
<rect x="3792.08" y="2528.45" width="13.85" height="59.22"/>
<rect x="3785.15" y="2537.65" width="27.70" height="38.81"/>
<rect x="3862.08" y="2508.44" width="13.85" height="58.02"/>
<rect x="3855.15" y="2525.25" width="27.70" height="29.21"/>
<rect x="3931.08" y="2176.35" width="13.85" height="144.84"/>
<rect x="3924.15" y="2230.36" width="27.70" height="70.82"/>
<rect x="4000.08" y="2537.65" width="13.85" height="57.62"/>
<rect x="3993.15" y="2555.26" width="27.70" height="34.41"/>
<rect x="4069.08" y="2519.65" width="13.85" height="60.02"/>
<rect x="4062.15" y="2543.25" width="27.70" height="24.41"/>
<rect x="4139.08" y="2500.44" width="13.85" height="57.22"/>
<rect x="4132.15" y="2517.24" width="27.70" height="31.21"/>
<rect x="4208.08" y="2131.13" width="13.85" height="175.25"/>
<rect x="4201.15" y="2204.35" width="27.70" height="88.03"/>
<rect x="4277.08" y="2528.45" width="13.85" height="70.02"/>
<rect x="4270.15" y="2535.65" width="27.70" height="35.61"/>
<rect x="4346.08" y="2504.44" width="13.85" height="85.22"/>
<rect x="4339.15" y="2527.25" width="27.70" height="42.41"/>
<rect x="4416.08" y="2491.24" width="13.85" height="72.02"/>
<rect x="4409.15" y="2502.44" width="27.70" height="36.81"/>
</g>
<polyline points="268.30,2523.25 337.55,2296.38 406.79,2595.27 476.04,2551.25 545.28,2550.45 614.53,2218.36 683.78,2570.46 753.02,2578.46 822.27,2502.44 891.51,2200.35 960.76,2578.46 1030.00,2540.45 1099.25,2512.44 1168.50,2178.35 1237.74,2512.44 1306.99,2546.45 1376.23,2484.44 1445.48,2164.34 1514.73,2610.47 1583.97,2540.45 1653.22,2416.42 1722.46,2374.40 1791.71,2556.46 1860.96,2502.44 1930.20,2506.44 1999.45,2314.39 2068.69,2592.47 2137.94,2541.25 2207.19,2537.25 2276.43,2228.36 2345.68,2558.46 2414.92,2565.26 2484.17,2528.45 2553.41,2339.59 2622.66,2526.45 2691.91,2556.46 2761.15,2582.46 2830.40,2322.39 2899.64,2584.46 2968.89,2590.47 3038.14,2545.25 3107.38,2324.39 3176.63,2606.47 3245.87,2572.46 3315.12,2554.46 3384.37,2264.37 3453.61,2586.46 3522.86,2524.45 3592.10,2525.25 3661.35,2324.39 3730.60,2612.47 3799.84,2523.65 3869.09,2527.65 3938.33,2197.15 4007.58,2562.46 4076.82,2501.64 4146.07,2470.43 4215.32,2237.16 4284.56,2617.27 4353.81,2507.64 4423.05,2494.44" fill="none" stroke="#ff0000" stroke-width="6.67" stroke-linejoin="round" stroke-linecap="square"/>
<polyline points="268.30,2523.25 337.55,2292.38 406.79,2586.46 476.04,2564.46 545.28,2548.45 614.53,2211.16 683.78,2567.66 753.02,2557.26 822.27,2502.44 891.51,2196.35 960.76,2564.46 1030.00,2532.45 1099.25,2514.44 1168.50,2174.35 1237.74,2540.45 1306.99,2526.45 1376.23,2488.44 1445.48,2192.35 1514.73,2582.46 1583.97,2518.44 1653.22,2410.41 1722.46,2362.40 1791.71,2561.26 1860.96,2497.64 1930.20,2492.44 1999.45,2300.38 2068.69,2591.27 2137.94,2528.45 2207.19,2525.25 2276.43,2234.36 2345.68,2558.46 2414.92,2547.65 2484.17,2518.44 2553.41,2300.38 2622.66,2569.26 2691.91,2552.45 2761.15,2531.25 2830.40,2280.38 2899.64,2560.46 2968.89,2570.46 3038.14,2544.45 3107.38,2280.38 3176.63,2567.66 3245.87,2569.66 3315.12,2547.65 3384.37,2300.38 3453.61,2572.46 3522.86,2558.46 3592.10,2529.65 3661.35,2286.38 3730.60,2576.46 3799.84,2558.46 3869.09,2536.45 3938.33,2253.17 4007.58,2567.66 4076.82,2550.45 4146.07,2532.45 4215.32,2238.36 4284.56,2559.66 4353.81,2545.25 4423.05,2519.65" fill="none" stroke="#0000ff" stroke-width="6.67" stroke-linejoin="round" stroke-linecap="square"/>
<g stroke="#000" stroke-width="4.17" fill="none" stroke-linecap="square">
<path d="M268.00 2523.25V2523.25M268.00 2523.25V2523.25M254.15 2523.25H281.85"/>
<path d="M337.00 2278.38V2273.26M337.00 2302.38V2302.38M323.15 2289.58H350.85"/>
<path d="M406.00 2576.46V2575.75M406.00 2598.47V2599.18M392.15 2587.66H419.85"/>
<path d="M476.00 2546.45V2535.73M476.00 2579.66V2586.38M462.15 2570.46H489.85"/>
<path d="M545.00 2538.45V2532.53M545.00 2559.26V2570.38M531.15 2546.45H558.85"/>
<path d="M614.00 2191.55V2185.63M614.00 2222.36V2226.28M600.15 2211.16H627.85"/>
<path d="M683.00 2562.46V2562.46M683.00 2575.66V2577.58M669.15 2568.46H696.85"/>
<path d="M753.00 2545.25V2526.53M753.00 2578.46V2587.58M739.15 2561.26H766.85"/>
<path d="M822.00 2492.44V2484.52M822.00 2511.64V2513.56M808.15 2503.24H835.85"/>
<path d="M891.00 2180.35V2173.63M891.00 2206.35V2207.47M877.15 2192.35H904.85"/>
<path d="M960.00 2550.45V2535.73M960.00 2578.46V2580.38M946.15 2568.46H973.85"/>
<path d="M1030.00 2521.25V2515.73M1030.00 2544.45V2552.37M1016.15 2530.45H1043.85"/>
<path d="M1099.00 2506.44V2498.52M1099.00 2519.25V2522.36M1085.15 2513.64H1112.85"/>
<path d="M1168.00 2146.34V2141.62M1168.00 2196.35V2205.47M1154.15 2174.35H1181.85"/>
<path d="M1237.00 2518.44V2516.53M1237.00 2558.46V2565.57M1223.15 2547.25H1250.85"/>
<path d="M1306.00 2505.24V2498.52M1306.00 2558.46V2584.38M1292.15 2527.25H1319.85"/>
<path d="M1376.00 2478.43V2478.43M1376.00 2502.44V2525.16M1362.15 2488.44H1389.85"/>
<path d="M1445.00 2114.33V2076.40M1445.00 2277.58V2331.11M1431.15 2186.35H1458.85"/>
<path d="M1514.00 2562.46V2545.74M1514.00 2612.47V2617.59M1500.15 2594.47H1527.85"/>
<path d="M1583.00 2458.43V2397.69M1583.00 2547.25V2553.57M1569.15 2516.44H1596.85"/>
<path d="M1653.00 2360.40V2341.68M1653.00 2481.63V2519.16M1639.15 2409.61H1666.85"/>
<path d="M1722.00 2308.38V2301.67M1722.00 2404.41V2421.13M1708.15 2365.20H1735.85"/>
<path d="M1791.00 2526.45V2510.53M1791.00 2603.27V2609.59M1777.15 2556.46H1804.85"/>
<path d="M1860.00 2469.63V2454.51M1860.00 2532.45V2555.17M1846.15 2498.44H1873.85"/>
<path d="M1930.00 2451.23V2417.30M1930.00 2532.45V2551.57M1916.15 2496.44H1943.85"/>
<path d="M1999.00 2267.17V2251.65M1999.00 2332.39V2333.11M1985.15 2301.58H2012.85"/>
<path d="M2068.00 2562.46V2543.74M2068.00 2613.67V2629.19M2054.15 2592.47H2081.85"/>
<path d="M2137.00 2481.63V2453.71M2137.00 2570.46V2591.18M2123.15 2524.45H2150.85"/>
<path d="M2207.00 2498.44V2486.52M2207.00 2547.25V2559.57M2193.15 2525.25H2220.85"/>
<path d="M2276.00 2201.15V2104.41M2276.00 2266.37V2281.49M2262.15 2233.56H2289.85"/>
<path d="M2345.00 2539.25V2506.53M2345.00 2581.66V2611.19M2331.15 2559.66H2358.85"/>
<path d="M2414.00 2512.44V2505.73M2414.00 2580.46V2597.18M2400.15 2546.45H2427.85"/>
<path d="M2484.00 2488.44V2458.51M2484.00 2551.25V2576.38M2470.15 2515.64H2497.85"/>
<path d="M2553.00 2258.37V2197.64M2553.00 2339.59V2385.12M2539.15 2309.58H2566.85"/>
<path d="M2622.00 2526.45V2485.72M2622.00 2619.67V2628.39M2608.15 2560.46H2635.85"/>
<path d="M2691.00 2497.64V2406.50M2691.00 2600.47V2635.59M2677.15 2556.46H2704.85"/>
<path d="M2761.00 2509.64V2365.69M2761.00 2568.46V2568.46M2747.15 2535.65H2774.85"/>
<path d="M2830.00 2225.56V2207.64M2830.00 2314.39V2318.30M2816.15 2287.18H2843.85"/>
<path d="M2899.00 2537.65V2511.73M2899.00 2586.46V2597.18M2885.15 2557.26H2912.85"/>
<path d="M2968.00 2543.25V2484.52M2968.00 2600.47V2626.39M2954.15 2571.26H2981.85"/>
<path d="M3038.00 2518.44V2505.33M3038.00 2572.46V2583.18M3024.15 2545.25H3051.85"/>
<path d="M3107.00 2191.15V2142.42M3107.00 2336.39V2346.31M3093.15 2311.19H3120.85"/>
<path d="M3176.00 2535.65V2470.52M3176.00 2607.27V2633.19M3162.15 2569.26H3189.85"/>
<path d="M3245.00 2548.45V2537.33M3245.00 2588.47V2628.39M3231.15 2563.26H3258.85"/>
<path d="M3315.00 2523.65V2508.53M3315.00 2571.66V2581.58M3301.15 2550.45H3328.85"/>
<path d="M3384.00 2262.37V2192.44M3384.00 2332.39V2343.11M3370.15 2310.38H3397.85"/>
<path d="M3453.00 2542.45V2526.53M3453.00 2597.67V2617.19M3439.15 2570.46H3466.85"/>
<path d="M3522.00 2525.25V2492.52M3522.00 2584.46V2604.39M3508.15 2565.26H3535.85"/>
<path d="M3592.00 2509.24V2415.70M3592.00 2556.46V2565.17M3578.15 2535.25H3605.85"/>
<path d="M3661.00 2229.16V2173.63M3661.00 2332.39V2346.31M3647.15 2292.38H3674.85"/>
<path d="M3730.00 2547.65V2528.53M3730.00 2603.67V2642.40M3716.15 2573.26H3743.85"/>
<path d="M3799.00 2528.45V2504.53M3799.00 2587.66V2604.39M3785.15 2568.46H3812.85"/>
<path d="M3869.00 2508.44V2490.52M3869.00 2566.46V2569.58M3855.15 2537.65H3882.85"/>
<path d="M3938.00 2176.35V2075.60M3938.00 2321.19V2337.51M3924.15 2259.17H3951.85"/>
<path d="M4007.00 2537.65V2520.53M4007.00 2595.27V2598.38M3993.15 2570.46H4020.85"/>
<path d="M4076.00 2519.65V2483.72M4076.00 2579.66V2612.39M4062.15 2555.26H4089.85"/>
<path d="M4146.00 2500.44V2478.52M4146.00 2557.66V2585.58M4132.15 2536.45H4159.85"/>
<path d="M4215.00 2131.13V2097.61M4215.00 2306.38V2323.10M4201.15 2253.17H4228.85"/>
<path d="M4284.00 2528.45V2519.73M4284.00 2598.47V2624.39M4270.15 2557.26H4297.85"/>
<path d="M4353.00 2504.44V2488.52M4353.00 2589.67V2595.58M4339.15 2545.25H4366.85"/>
<path d="M4423.00 2491.24V2437.71M4423.00 2563.26V2580.38M4409.15 2521.65H4436.85"/>
</g>
</g>
<g stroke="#000" stroke-width="6.67">
<line x1="268.50" y1="2671.5" x2="268.50" y2="2696.5"/>
<line x1="545.50" y1="2671.5" x2="545.50" y2="2696.5"/>
<line x1="822.50" y1="2671.5" x2="822.50" y2="2696.5"/>
<line x1="1099.50" y1="2671.5" x2="1099.50" y2="2696.5"/>
<line x1="1376.50" y1="2671.5" x2="1376.50" y2="2696.5"/>
<line x1="1653.50" y1="2671.5" x2="1653.50" y2="2696.5"/>
<line x1="1930.50" y1="2671.5" x2="1930.50" y2="2696.5"/>
<line x1="2207.50" y1="2671.5" x2="2207.50" y2="2696.5"/>
<line x1="2484.50" y1="2671.5" x2="2484.50" y2="2696.5"/>
<line x1="2761.50" y1="2671.5" x2="2761.50" y2="2696.5"/>
<line x1="3038.50" y1="2671.5" x2="3038.50" y2="2696.5"/>
<line x1="3315.50" y1="2671.5" x2="3315.50" y2="2696.5"/>
<line x1="3592.50" y1="2671.5" x2="3592.50" y2="2696.5"/>
<line x1="3869.50" y1="2671.5" x2="3869.50" y2="2696.5"/>
<line x1="4146.50" y1="2671.5" x2="4146.50" y2="2696.5"/>
<line x1="4423.50" y1="2671.5" x2="4423.50" y2="2696.5"/>
<line x1="233.5" y1="2667.50" x2="208.5" y2="2667.50"/>
<line x1="233.5" y1="2453.50" x2="208.5" y2="2453.50"/>
<line x1="233.5" y1="2239.50" x2="208.5" y2="2239.50"/>
</g>
<rect x="233.5" y="2047.5" width="4224.00" height="624.0" fill="none" stroke="#000" stroke-width="6.67"/>
<text y="2688.90" font-size="61.25"><tspan x="148.03" textLength="34.20" lengthAdjust="spacingAndGlyphs">0</tspan></text>
<text y="2474.90" font-size="61.25"><tspan x="147.88" textLength="32.96" lengthAdjust="spacingAndGlyphs">2</tspan></text>
<text y="2260.90" font-size="61.25"><tspan x="148.02" textLength="34.20" lengthAdjust="spacingAndGlyphs">4</tspan></text>
<text y="2021.80" font-size="70.00"><tspan x="235.05" textLength="147.56" lengthAdjust="spacingAndGlyphs">10m</tspan> <tspan x="407.37" textLength="153.46" lengthAdjust="spacingAndGlyphs">wind</tspan> <tspan x="584.86" textLength="198.45" lengthAdjust="spacingAndGlyphs">speed</tspan> <tspan x="806.91" textLength="172.07" lengthAdjust="spacingAndGlyphs">(m/s)</tspan></text>
<clipPath id="c3"><rect x="233.5" y="2815.5" width="4224.00" height="624.0"/></clipPath>
<g clip-path="url(#c3)">
<g stroke="#b0b0b0" stroke-opacity="0.6" stroke-width="4.17" stroke-dasharray="15.42 6.67" fill="none">
<line x1="268.00" y1="3439.5" x2="268.00" y2="2815.5"/>
<line x1="545.00" y1="3439.5" x2="545.00" y2="2815.5"/>
<line x1="822.00" y1="3439.5" x2="822.00" y2="2815.5"/>
<line x1="1099.00" y1="3439.5" x2="1099.00" y2="2815.5"/>
<line x1="1376.00" y1="3439.5" x2="1376.00" y2="2815.5"/>
<line x1="1653.00" y1="3439.5" x2="1653.00" y2="2815.5"/>
<line x1="1930.00" y1="3439.5" x2="1930.00" y2="2815.5"/>
<line x1="2207.00" y1="3439.5" x2="2207.00" y2="2815.5"/>
<line x1="2484.00" y1="3439.5" x2="2484.00" y2="2815.5"/>
<line x1="2761.00" y1="3439.5" x2="2761.00" y2="2815.5"/>
<line x1="3038.00" y1="3439.5" x2="3038.00" y2="2815.5"/>
<line x1="3315.00" y1="3439.5" x2="3315.00" y2="2815.5"/>
<line x1="3592.00" y1="3439.5" x2="3592.00" y2="2815.5"/>
<line x1="3869.00" y1="3439.5" x2="3869.00" y2="2815.5"/>
<line x1="4146.00" y1="3439.5" x2="4146.00" y2="2815.5"/>
<line x1="4423.00" y1="3439.5" x2="4423.00" y2="2815.5"/>
<line x1="233.5" y1="3416.00" x2="4457.5" y2="3416.00"/>
<line x1="233.5" y1="3181.00" x2="4457.5" y2="3181.00"/>
<line x1="233.5" y1="2946.00" x2="4457.5" y2="2946.00"/>
</g>
<g stroke="#000" stroke-width="4.17" fill="#99ff66">
<rect x="261.08" y="3290.95" width="13.85" height="0.01"/>
<rect x="254.15" y="3290.95" width="27.70" height="0.01"/>
<rect x="330.08" y="2970.05" width="13.85" height="8.00"/>
<rect x="323.15" y="2972.05" width="27.70" height="4.00"/>
<rect x="399.08" y="3168.91" width="13.85" height="19.21"/>
<rect x="392.15" y="3172.11" width="27.70" height="14.00"/>
<rect x="469.08" y="3272.94" width="13.85" height="16.00"/>
<rect x="462.15" y="3275.34" width="27.70" height="10.80"/>
<rect x="538.08" y="3335.36" width="13.85" height="12.80"/>
<rect x="531.15" y="3338.16" width="27.70" height="8.00"/>
<rect x="607.08" y="2962.05" width="13.85" height="9.20"/>
<rect x="600.15" y="2964.05" width="27.70" height="5.20"/>
<rect x="676.08" y="3171.31" width="13.85" height="16.00"/>
<rect x="669.15" y="3174.11" width="27.70" height="10.00"/>
<rect x="746.08" y="3270.14" width="13.85" height="18.81"/>
<rect x="739.15" y="3272.94" width="27.70" height="13.20"/>
<rect x="815.08" y="3322.16" width="13.85" height="19.21"/>
<rect x="808.15" y="3324.96" width="27.70" height="14.00"/>
<rect x="884.08" y="2956.85" width="13.85" height="10.40"/>
<rect x="877.15" y="2958.85" width="27.70" height="6.40"/>
<rect x="953.08" y="3179.31" width="13.85" height="48.01"/>
<rect x="946.15" y="3191.32" width="27.70" height="32.81"/>
<rect x="1023.08" y="3286.14" width="13.85" height="14.00"/>
<rect x="1016.15" y="3288.95" width="27.70" height="8.40"/>
<rect x="1092.08" y="3343.36" width="13.85" height="20.81"/>
<rect x="1085.15" y="3346.16" width="27.70" height="12.00"/>
<rect x="1161.08" y="2988.06" width="13.85" height="12.00"/>
<rect x="1154.15" y="2990.06" width="27.70" height="7.20"/>
<rect x="1230.08" y="3166.11" width="13.85" height="76.02"/>
<rect x="1223.15" y="3180.11" width="27.70" height="51.21"/>
<rect x="1299.08" y="3306.15" width="13.85" height="17.20"/>
<rect x="1292.15" y="3311.35" width="27.70" height="8.80"/>
<rect x="1369.08" y="3372.97" width="13.85" height="19.21"/>
<rect x="1362.15" y="3376.97" width="27.70" height="11.20"/>
<rect x="1438.08" y="2998.06" width="13.85" height="28.01"/>
<rect x="1431.15" y="3003.26" width="27.70" height="14.80"/>
<rect x="1507.08" y="3221.33" width="13.85" height="48.81"/>
<rect x="1500.15" y="3226.93" width="27.70" height="28.41"/>
<rect x="1576.08" y="3306.95" width="13.85" height="30.41"/>
<rect x="1569.15" y="3317.35" width="27.70" height="14.00"/>
<rect x="1646.08" y="3317.35" width="13.85" height="44.81"/>
<rect x="1639.15" y="3327.36" width="27.70" height="32.01"/>
<rect x="1715.08" y="2944.05" width="13.85" height="24.01"/>
<rect x="1708.15" y="2950.05" width="27.70" height="14.00"/>
<rect x="1784.08" y="3214.92" width="13.85" height="31.21"/>
<rect x="1777.15" y="3222.13" width="27.70" height="14.80"/>
<rect x="1853.08" y="3290.15" width="13.85" height="26.01"/>
<rect x="1846.15" y="3296.15" width="27.70" height="13.20"/>
<rect x="1923.08" y="3336.16" width="13.85" height="32.01"/>
<rect x="1916.15" y="3342.16" width="27.70" height="20.01"/>
<rect x="1992.08" y="2947.25" width="13.85" height="35.61"/>
<rect x="1985.15" y="2956.85" width="27.70" height="24.01"/>
<rect x="2061.08" y="3218.13" width="13.85" height="58.82"/>
<rect x="2054.15" y="3244.13" width="27.70" height="26.81"/>
<rect x="2130.08" y="3296.15" width="13.85" height="31.21"/>
<rect x="2123.15" y="3305.35" width="27.70" height="16.80"/>
<rect x="2200.08" y="3334.16" width="13.85" height="41.21"/>
<rect x="2193.15" y="3344.16" width="27.70" height="25.21"/>
<rect x="2269.08" y="2970.85" width="13.85" height="49.21"/>
<rect x="2262.15" y="2982.06" width="27.70" height="36.01"/>
<rect x="2338.08" y="3238.93" width="13.85" height="40.01"/>
<rect x="2331.15" y="3253.34" width="27.70" height="18.81"/>
<rect x="2407.08" y="3323.36" width="13.85" height="28.81"/>
<rect x="2400.15" y="3332.16" width="27.70" height="12.80"/>
<rect x="2477.08" y="3360.17" width="13.85" height="30.01"/>
<rect x="2470.15" y="3364.17" width="27.70" height="20.01"/>
<rect x="2546.08" y="2964.85" width="13.85" height="53.22"/>
<rect x="2539.15" y="2979.26" width="27.70" height="28.81"/>
<rect x="2615.08" y="3203.32" width="13.85" height="78.82"/>
<rect x="2608.15" y="3220.13" width="27.70" height="41.21"/>
<rect x="2684.08" y="3298.95" width="13.85" height="56.02"/>
<rect x="2677.15" y="3306.15" width="27.70" height="36.81"/>
<rect x="2754.08" y="3338.16" width="13.85" height="49.21"/>
<rect x="2747.15" y="3344.96" width="27.70" height="26.01"/>
<rect x="2823.08" y="2950.05" width="13.85" height="62.02"/>
<rect x="2816.15" y="2962.85" width="27.70" height="40.41"/>
<rect x="2892.08" y="3208.92" width="13.85" height="39.21"/>
<rect x="2885.15" y="3216.92" width="27.70" height="27.21"/>
<rect x="2961.08" y="3297.35" width="13.85" height="46.01"/>
<rect x="2954.15" y="3304.15" width="27.70" height="20.01"/>
<rect x="3031.08" y="3335.36" width="13.85" height="44.81"/>
<rect x="3024.15" y="3342.96" width="27.70" height="21.21"/>
<rect x="3100.08" y="2937.24" width="13.85" height="86.02"/>
<rect x="3093.15" y="2964.05" width="27.70" height="31.21"/>
<rect x="3169.08" y="3202.92" width="13.85" height="41.21"/>
<rect x="3162.15" y="3216.12" width="27.70" height="22.81"/>
<rect x="3238.08" y="3281.34" width="13.85" height="46.81"/>
<rect x="3231.15" y="3292.95" width="27.70" height="28.41"/>
<rect x="3308.08" y="3320.15" width="13.85" height="44.01"/>
<rect x="3301.15" y="3330.16" width="27.70" height="26.01"/>
<rect x="3377.08" y="2906.84" width="13.85" height="79.22"/>
<rect x="3370.15" y="2932.84" width="27.70" height="34.01"/>
<rect x="3446.08" y="3192.12" width="13.85" height="40.01"/>
<rect x="3439.15" y="3205.32" width="27.70" height="22.81"/>
<rect x="3515.08" y="3275.34" width="13.85" height="40.01"/>
<rect x="3508.15" y="3284.94" width="27.70" height="24.41"/>
<rect x="3585.08" y="3314.15" width="13.85" height="46.01"/>
<rect x="3578.15" y="3323.36" width="27.70" height="26.01"/>
<rect x="3654.08" y="2883.23" width="13.85" height="86.83"/>
<rect x="3647.15" y="2915.24" width="27.70" height="40.01"/>
<rect x="3723.08" y="3189.32" width="13.85" height="58.02"/>
<rect x="3716.15" y="3195.32" width="27.70" height="24.81"/>
<rect x="3792.08" y="3262.14" width="13.85" height="61.22"/>
<rect x="3785.15" y="3269.34" width="27.70" height="37.61"/>
<rect x="3862.08" y="3298.15" width="13.85" height="60.02"/>
<rect x="3855.15" y="3317.35" width="27.70" height="33.61"/>
<rect x="3931.08" y="2884.03" width="13.85" height="86.02"/>
<rect x="3924.15" y="2908.04" width="27.70" height="46.01"/>
<rect x="4000.08" y="3179.31" width="13.85" height="64.02"/>
<rect x="3993.15" y="3196.12" width="27.70" height="22.81"/>
<rect x="4069.08" y="3252.14" width="13.85" height="62.82"/>
<rect x="4062.15" y="3272.14" width="27.70" height="34.81"/>
<rect x="4139.08" y="3292.15" width="13.85" height="75.22"/>
<rect x="4132.15" y="3318.15" width="27.70" height="32.81"/>
<rect x="4208.08" y="2870.02" width="13.85" height="116.03"/>
<rect x="4201.15" y="2905.23" width="27.70" height="58.82"/>
<rect x="4277.08" y="3174.11" width="13.85" height="50.01"/>
<rect x="4270.15" y="3187.32" width="27.70" height="35.61"/>
<rect x="4346.08" y="3247.33" width="13.85" height="78.02"/>
<rect x="4339.15" y="3270.94" width="27.70" height="40.01"/>
<rect x="4416.08" y="3303.35" width="13.85" height="64.82"/>
<rect x="4409.15" y="3306.15" width="27.70" height="51.21"/>
</g>
<polyline points="268.30,3290.95 337.55,2975.26 406.79,3184.12 476.04,3282.14 545.28,3342.16 614.53,2968.05 683.78,3182.92 753.02,3287.35 822.27,3335.36 891.51,2960.05 960.76,3218.13 1030.00,3297.35 1099.25,3348.16 1168.50,2994.06 1237.74,3174.11 1306.99,3311.35 1376.23,3374.17 1445.48,3004.86 1514.73,3226.13 1583.97,3328.96 1653.22,3346.16 1722.46,2952.85 1791.71,3226.13 1860.96,3307.35 1930.20,3360.17 1999.45,2966.05 2068.69,3236.13 2137.94,3296.15 2207.19,3342.16 2276.43,3002.06 2345.68,3259.34 2414.92,3335.36 2484.17,3366.17 2553.41,3006.06 2622.66,3228.13 2691.91,3305.35 2761.15,3366.17 2830.40,3008.06 2899.64,3242.13 2968.89,3314.15 3038.14,3338.16 3107.38,2916.04 3176.63,3218.13 3245.87,3281.34 3315.12,3318.15 3384.37,2896.03 3453.61,3216.12 3522.86,3280.14 3592.10,3322.16 3661.35,2880.03 3730.60,3208.12 3799.84,3262.14 3869.09,3318.15 3938.33,2894.03 4007.58,3202.12 4076.82,3285.34 4146.07,3346.16 4215.32,2900.03 4284.56,3225.33 4353.81,3280.14 4423.05,3330.16" fill="none" stroke="#ff0000" stroke-width="6.67" stroke-linejoin="round" stroke-linecap="square"/>
<polyline points="268.30,3290.95 337.55,2975.26 406.79,3178.11 476.04,3281.34 545.28,3338.16 614.53,2968.85 683.78,3179.31 753.02,3282.14 822.27,3332.96 891.51,2963.25 960.76,3208.92 1030.00,3292.15 1099.25,3350.16 1168.50,2996.06 1237.74,3206.12 1306.99,3315.35 1376.23,3382.17 1445.48,3012.87 1514.73,3240.13 1583.97,3324.96 1653.22,3342.16 1722.46,2968.85 1791.71,3229.33 1860.96,3303.35 1930.20,3351.36 1999.45,2972.05 2068.69,3248.13 2137.94,3314.15 2207.19,3354.16 2276.43,3002.06 2345.68,3261.34 2414.92,3335.36 2484.17,3370.17 2553.41,2991.26 2622.66,3238.13 2691.91,3324.16 2761.15,3350.16 2830.40,2982.86 2899.64,3234.13 2968.89,3315.35 3038.14,3352.16 3107.38,2982.06 3176.63,3228.93 3245.87,3305.35 3315.12,3344.16 3384.37,2954.05 3453.61,3216.12 3522.86,3296.15 3592.10,3338.16 3661.35,2938.04 3730.60,3206.12 3799.84,3287.35 3869.09,3330.16 3938.33,2931.24 4007.58,3202.12 4076.82,3290.15 4146.07,3330.16 4215.32,2932.84 4284.56,3204.12 4353.81,3290.15 4423.05,3334.16" fill="none" stroke="#0000ff" stroke-width="6.67" stroke-linejoin="round" stroke-linecap="square"/>
<g stroke="#000" stroke-width="4.17" fill="none" stroke-linecap="square">
<path d="M268.00 3290.95V3290.95M268.00 3290.95V3290.95M254.15 3290.95H281.85"/>
<path d="M337.00 2970.05V2968.14M337.00 2978.06V2978.06M323.15 2974.05H350.85"/>
<path d="M406.00 3168.91V3168.20M406.00 3188.12V3195.23M392.15 3178.91H419.85"/>
<path d="M476.00 3272.94V3272.23M476.00 3288.95V3290.86M462.15 3280.14H489.85"/>
<path d="M545.00 3335.36V3327.04M545.00 3348.16V3354.08M531.15 3341.36H558.85"/>
<path d="M614.00 2962.05V2958.93M614.00 2971.25V2973.97M600.15 2966.85H627.85"/>
<path d="M683.00 3171.31V3169.40M683.00 3187.32V3187.32M669.15 3178.91H696.85"/>
<path d="M753.00 3270.14V3263.02M753.00 3288.95V3289.26M739.15 3281.34H766.85"/>
<path d="M822.00 3322.16V3322.16M822.00 3341.36V3344.08M808.15 3332.16H835.85"/>
<path d="M891.00 2956.85V2956.13M891.00 2967.25V2967.97M877.15 2962.05H904.85"/>
<path d="M960.00 3179.31V3153.39M960.00 3227.33V3230.04M946.15 3212.12H973.85"/>
<path d="M1030.00 3286.14V3284.23M1030.00 3300.15V3301.26M1016.15 3292.95H1043.85"/>
<path d="M1099.00 3343.36V3336.24M1099.00 3364.17V3370.88M1085.15 3352.16H1112.85"/>
<path d="M1168.00 2988.06V2984.94M1168.00 3000.06V3001.18M1154.15 2993.26H1181.85"/>
<path d="M1237.00 3166.11V3147.39M1237.00 3242.13V3251.25M1223.15 3206.12H1250.85"/>
<path d="M1306.00 3306.15V3302.23M1306.00 3323.36V3330.07M1292.15 3315.35H1319.85"/>
<path d="M1376.00 3372.97V3358.25M1376.00 3392.18V3410.10M1362.15 3382.97H1389.85"/>
<path d="M1445.00 2998.06V2994.15M1445.00 3026.07V3043.99M1431.15 3010.87H1458.85"/>
<path d="M1514.00 3221.33V3209.41M1514.00 3270.14V3294.06M1500.15 3236.13H1527.85"/>
<path d="M1583.00 3306.95V3247.42M1583.00 3337.36V3359.28M1569.15 3326.16H1596.85"/>
<path d="M1653.00 3317.35V3314.24M1653.00 3362.17V3387.29M1639.15 3347.36H1666.85"/>
<path d="M1722.00 2944.05V2937.33M1722.00 2968.05V2991.18M1708.15 2956.85H1735.85"/>
<path d="M1791.00 3214.92V3194.20M1791.00 3246.13V3257.25M1777.15 3229.33H1804.85"/>
<path d="M1860.00 3290.15V3277.03M1860.00 3316.15V3326.07M1846.15 3303.35H1873.85"/>
<path d="M1930.00 3336.16V3336.16M1930.00 3368.17V3378.09M1916.15 3352.16H1943.85"/>
<path d="M1999.00 2947.25V2941.33M1999.00 2982.86V3017.98M1985.15 2968.85H2012.85"/>
<path d="M2068.00 3218.13V3157.39M2068.00 3276.94V3284.86M2054.15 3257.34H2081.85"/>
<path d="M2137.00 3296.15V3288.23M2137.00 3327.36V3336.07M2123.15 3312.95H2150.85"/>
<path d="M2207.00 3334.16V3326.24M2207.00 3375.37V3389.29M2193.15 3360.97H2220.85"/>
<path d="M2276.00 2970.85V2967.34M2276.00 3020.07V3033.19M2262.15 3004.86H2289.85"/>
<path d="M2345.00 3238.93V3195.00M2345.00 3278.94V3290.86M2331.15 3262.14H2358.85"/>
<path d="M2414.00 3323.36V3257.42M2414.00 3352.16V3355.28M2400.15 3337.36H2427.85"/>
<path d="M2484.00 3360.17V3327.44M2484.00 3390.17V3398.89M2470.15 3375.37H2497.85"/>
<path d="M2553.00 2964.85V2924.12M2553.00 3018.07V3033.99M2539.15 2988.86H2566.85"/>
<path d="M2622.00 3203.32V3191.40M2622.00 3282.14V3289.26M2608.15 3231.33H2635.85"/>
<path d="M2691.00 3298.95V3292.23M2691.00 3354.96V3358.08M2677.15 3321.36H2704.85"/>
<path d="M2761.00 3338.16V3307.04M2761.00 3387.37V3410.90M2747.15 3357.37H2774.85"/>
<path d="M2830.00 2950.05V2925.33M2830.00 3012.07V3027.19M2816.15 2977.26H2843.85"/>
<path d="M2899.00 3208.92V3164.19M2899.00 3248.13V3268.06M2885.15 3231.33H2912.85"/>
<path d="M2968.00 3297.35V3286.23M2968.00 3343.36V3356.08M2954.15 3316.15H2981.85"/>
<path d="M3038.00 3335.36V3324.24M3038.00 3380.17V3386.09M3024.15 3360.97H3051.85"/>
<path d="M3107.00 2937.24V2937.24M3107.00 3023.27V3039.99M3093.15 2976.86H3120.85"/>
<path d="M3176.00 3202.92V3192.20M3176.00 3244.13V3256.85M3162.15 3226.13H3189.85"/>
<path d="M3245.00 3281.34V3261.02M3245.00 3328.16V3341.28M3231.15 3306.95H3258.85"/>
<path d="M3315.00 3320.15V3306.24M3315.00 3364.17V3402.09M3301.15 3344.16H3328.85"/>
<path d="M3384.00 2906.84V2884.11M3384.00 2986.06V3044.79M3370.15 2951.25H3397.85"/>
<path d="M3453.00 3192.12V3166.19M3453.00 3232.13V3268.86M3439.15 3215.32H3466.85"/>
<path d="M3522.00 3275.34V3257.42M3522.00 3315.35V3354.08M3508.15 3296.15H3535.85"/>
<path d="M3592.00 3314.15V3294.23M3592.00 3360.17V3398.09M3578.15 3338.16H3605.85"/>
<path d="M3661.00 2883.23V2870.11M3661.00 2970.05V3047.99M3647.15 2938.84H3674.85"/>
<path d="M3730.00 3189.32V3181.40M3730.00 3247.33V3264.85M3716.15 3204.92H3743.85"/>
<path d="M3799.00 3262.14V3250.22M3799.00 3323.36V3338.08M3785.15 3284.14H3812.85"/>
<path d="M3869.00 3298.15V3280.23M3869.00 3358.17V3376.09M3855.15 3336.16H3882.85"/>
<path d="M3938.00 2884.03V2843.30M3938.00 2970.05V3002.78M3924.15 2937.24H3951.85"/>
<path d="M4007.00 3179.31V3172.20M4007.00 3243.33V3252.05M3993.15 3202.12H4020.85"/>
<path d="M4076.00 3252.14V3235.41M4076.00 3314.95V3348.08M4062.15 3291.35H4089.85"/>
<path d="M4146.00 3292.15V3271.43M4146.00 3367.37V3386.09M4132.15 3336.16H4159.85"/>
<path d="M4215.00 2870.02V2861.31M4215.00 2986.06V3033.99M4201.15 2930.84H4228.85"/>
<path d="M4284.00 3174.11V3144.19M4284.00 3224.13V3266.85M4270.15 3203.32H4297.85"/>
<path d="M4353.00 3247.33V3235.41M4353.00 3325.36V3335.27M4339.15 3290.15H4366.85"/>
<path d="M4423.00 3303.35V3278.23M4423.00 3368.17V3396.09M4409.15 3331.36H4436.85"/>
</g>
</g>
<g stroke="#000" stroke-width="6.67">
<line x1="268.50" y1="3439.5" x2="268.50" y2="3464.5"/>
<line x1="545.50" y1="3439.5" x2="545.50" y2="3464.5"/>
<line x1="822.50" y1="3439.5" x2="822.50" y2="3464.5"/>
<line x1="1099.50" y1="3439.5" x2="1099.50" y2="3464.5"/>
<line x1="1376.50" y1="3439.5" x2="1376.50" y2="3464.5"/>
<line x1="1653.50" y1="3439.5" x2="1653.50" y2="3464.5"/>
<line x1="1930.50" y1="3439.5" x2="1930.50" y2="3464.5"/>
<line x1="2207.50" y1="3439.5" x2="2207.50" y2="3464.5"/>
<line x1="2484.50" y1="3439.5" x2="2484.50" y2="3464.5"/>
<line x1="2761.50" y1="3439.5" x2="2761.50" y2="3464.5"/>
<line x1="3038.50" y1="3439.5" x2="3038.50" y2="3464.5"/>
<line x1="3315.50" y1="3439.5" x2="3315.50" y2="3464.5"/>
<line x1="3592.50" y1="3439.5" x2="3592.50" y2="3464.5"/>
<line x1="3869.50" y1="3439.5" x2="3869.50" y2="3464.5"/>
<line x1="4146.50" y1="3439.5" x2="4146.50" y2="3464.5"/>
<line x1="4423.50" y1="3439.5" x2="4423.50" y2="3464.5"/>
<line x1="233.5" y1="3416.50" x2="208.5" y2="3416.50"/>
<line x1="233.5" y1="3181.50" x2="208.5" y2="3181.50"/>
<line x1="233.5" y1="2946.50" x2="208.5" y2="2946.50"/>
</g>
<rect x="233.5" y="2815.5" width="4224.00" height="624.0" fill="none" stroke="#000" stroke-width="6.67"/>
<text y="3437.90" font-size="61.25"><tspan x="63.31" textLength="119.26" lengthAdjust="spacingAndGlyphs">−10</tspan></text>
<text y="3202.90" font-size="61.25"><tspan x="148.03" textLength="34.20" lengthAdjust="spacingAndGlyphs">0</tspan></text>
<text y="2967.90" font-size="61.25"><tspan x="111.00" textLength="71.33" lengthAdjust="spacingAndGlyphs">10</tspan></text>
<text y="2789.80" font-size="70.00"><tspan x="234.56" textLength="105.65" lengthAdjust="spacingAndGlyphs">2m</tspan> <tspan x="362.67" textLength="418.33" lengthAdjust="spacingAndGlyphs">temperature</tspan> <tspan x="803.72" textLength="124.03" lengthAdjust="spacingAndGlyphs">(°C)</tspan></text>
<text y="3534.50" font-size="61.25"><tspan x="212.50" textLength="112.31" lengthAdjust="spacingAndGlyphs">00Z</tspan></text>
<text y="3599.20" font-size="61.25"><tspan x="180.97" textLength="175.49" lengthAdjust="spacingAndGlyphs">01Feb</tspan></text>
<text y="3534.50" font-size="61.25"><tspan x="489.49" textLength="112.31" lengthAdjust="spacingAndGlyphs">00Z</tspan></text>
<text y="3599.20" font-size="61.25"><tspan x="457.96" textLength="175.49" lengthAdjust="spacingAndGlyphs">02Feb</tspan></text>
<text y="3534.50" font-size="61.25"><tspan x="766.47" textLength="112.31" lengthAdjust="spacingAndGlyphs">00Z</tspan></text>
<text y="3599.20" font-size="61.25"><tspan x="734.94" textLength="175.49" lengthAdjust="spacingAndGlyphs">03Feb</tspan></text>
<text y="3534.50" font-size="61.25"><tspan x="1043.46" textLength="112.31" lengthAdjust="spacingAndGlyphs">00Z</tspan></text>
<text y="3599.20" font-size="61.25"><tspan x="1011.93" textLength="175.49" lengthAdjust="spacingAndGlyphs">04Feb</tspan></text>
<text y="3534.50" font-size="61.25"><tspan x="1320.44" textLength="112.31" lengthAdjust="spacingAndGlyphs">00Z</tspan></text>
<text y="3599.20" font-size="61.25"><tspan x="1288.91" textLength="175.49" lengthAdjust="spacingAndGlyphs">05Feb</tspan></text>
<text y="3534.50" font-size="61.25"><tspan x="1597.42" textLength="112.31" lengthAdjust="spacingAndGlyphs">00Z</tspan></text>
<text y="3599.20" font-size="61.25"><tspan x="1565.89" textLength="175.49" lengthAdjust="spacingAndGlyphs">06Feb</tspan></text>
<text y="3534.50" font-size="61.25"><tspan x="1874.41" textLength="112.31" lengthAdjust="spacingAndGlyphs">00Z</tspan></text>
<text y="3599.20" font-size="61.25"><tspan x="1842.88" textLength="175.49" lengthAdjust="spacingAndGlyphs">07Feb</tspan></text>
<text y="3534.50" font-size="61.25"><tspan x="2151.39" textLength="112.31" lengthAdjust="spacingAndGlyphs">00Z</tspan></text>
<text y="3599.20" font-size="61.25"><tspan x="2119.86" textLength="175.49" lengthAdjust="spacingAndGlyphs">08Feb</tspan></text>
<text y="3534.50" font-size="61.25"><tspan x="2428.37" textLength="112.31" lengthAdjust="spacingAndGlyphs">00Z</tspan></text>
<text y="3599.20" font-size="61.25"><tspan x="2396.84" textLength="175.49" lengthAdjust="spacingAndGlyphs">09Feb</tspan></text>
<text y="3534.50" font-size="61.25"><tspan x="2705.36" textLength="112.31" lengthAdjust="spacingAndGlyphs">00Z</tspan></text>
<text y="3599.20" font-size="61.25"><tspan x="2674.10" textLength="175.21" lengthAdjust="spacingAndGlyphs">10Feb</tspan></text>
<text y="3534.50" font-size="61.25"><tspan x="2982.34" textLength="112.31" lengthAdjust="spacingAndGlyphs">00Z</tspan></text>
<text y="3599.20" font-size="61.25"><tspan x="2950.95" textLength="175.41" lengthAdjust="spacingAndGlyphs">11Feb</tspan></text>
<text y="3534.50" font-size="61.25"><tspan x="3259.32" textLength="112.31" lengthAdjust="spacingAndGlyphs">00Z</tspan></text>
<text y="3599.20" font-size="61.25"><tspan x="3228.07" textLength="175.21" lengthAdjust="spacingAndGlyphs">12Feb</tspan></text>
<text y="3534.50" font-size="61.25"><tspan x="3536.31" textLength="112.31" lengthAdjust="spacingAndGlyphs">00Z</tspan></text>
<text y="3599.20" font-size="61.25"><tspan x="3505.05" textLength="175.21" lengthAdjust="spacingAndGlyphs">13Feb</tspan></text>
<text y="3534.50" font-size="61.25"><tspan x="3813.29" textLength="112.31" lengthAdjust="spacingAndGlyphs">00Z</tspan></text>
<text y="3599.20" font-size="61.25"><tspan x="3782.04" textLength="175.21" lengthAdjust="spacingAndGlyphs">14Feb</tspan></text>
<text y="3534.50" font-size="61.25"><tspan x="4090.28" textLength="112.31" lengthAdjust="spacingAndGlyphs">00Z</tspan></text>
<text y="3599.20" font-size="61.25"><tspan x="4059.02" textLength="175.21" lengthAdjust="spacingAndGlyphs">15Feb</tspan></text>
<text y="3534.50" font-size="61.25"><tspan x="4367.26" textLength="112.31" lengthAdjust="spacingAndGlyphs">00Z</tspan></text>
<text y="3599.20" font-size="61.25"><tspan x="4336.00" textLength="175.21" lengthAdjust="spacingAndGlyphs">16Feb</tspan></text>
</svg>
</body></html>
